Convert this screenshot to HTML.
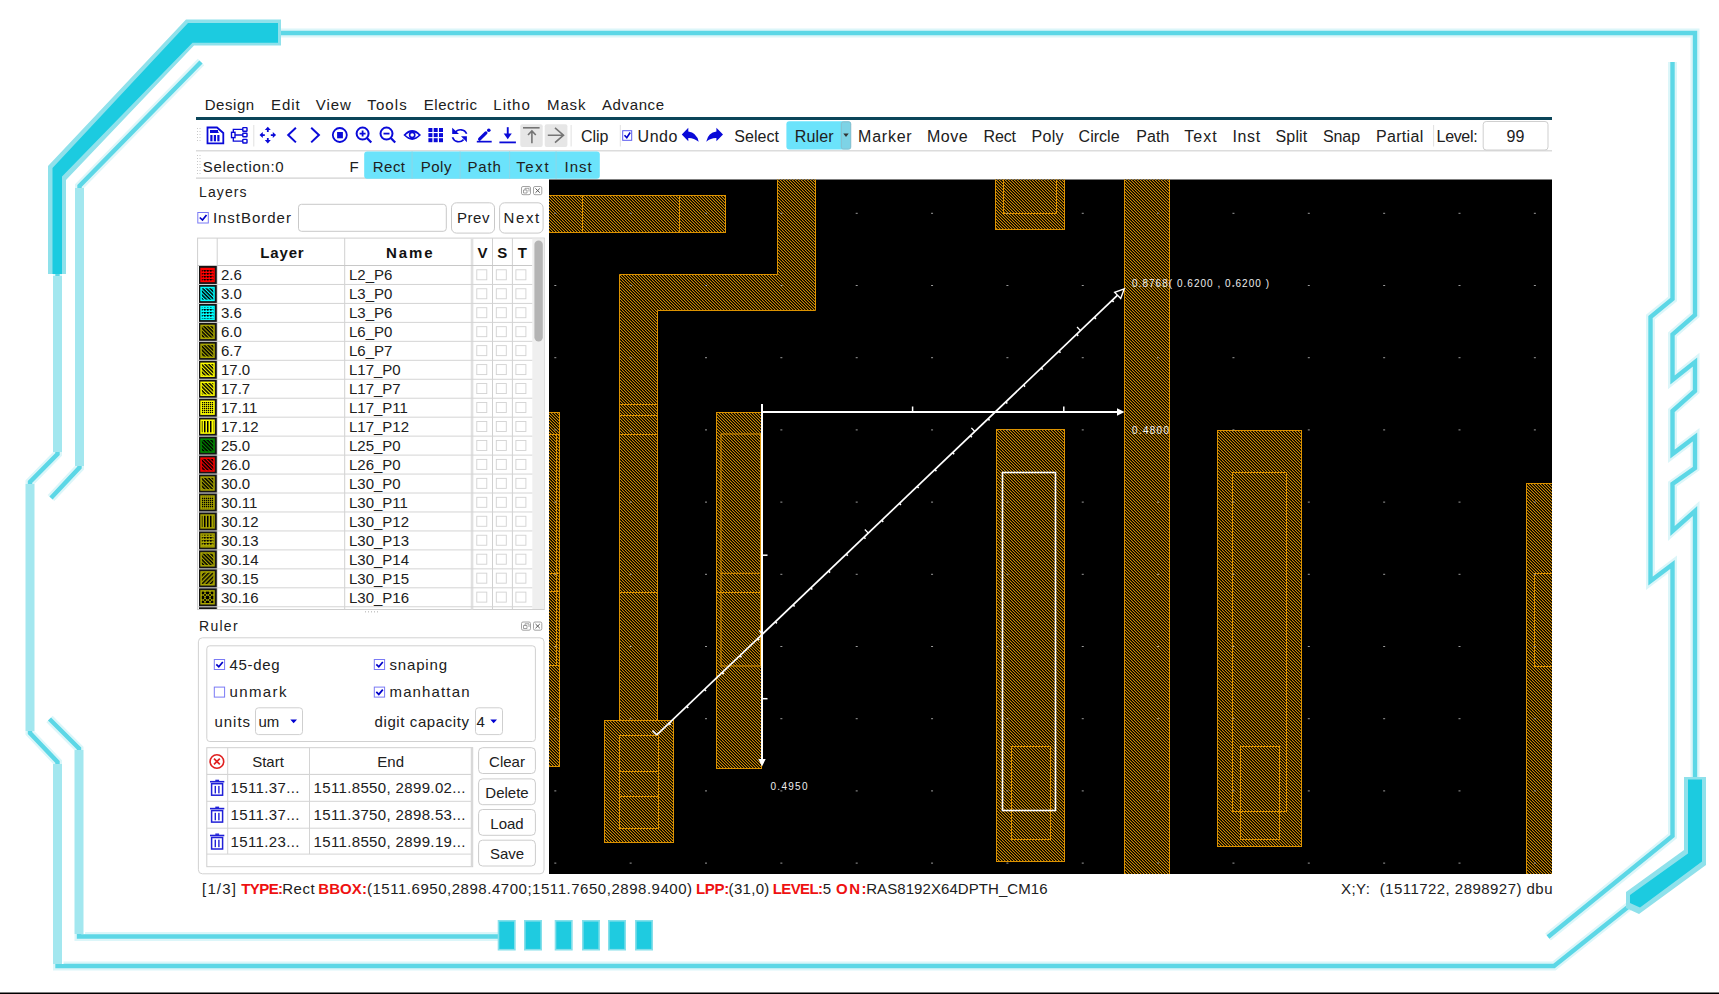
<!DOCTYPE html><html><head><meta charset="utf-8"><style>
html,body{margin:0;padding:0;}
body{width:1719px;height:994px;overflow:hidden;background:#fff;}
svg{position:absolute;left:0;top:0;font-family:"Liberation Sans",sans-serif;}
</style></head><body>
<svg width="1719" height="994" viewBox="0 0 1719 994">
<defs>
<pattern id="p_grid" width="3" height="3" patternUnits="userSpaceOnUse"><rect x="0" y="0" width="1.6" height="1.6" fill="#000"/><rect x="0" y="0" width="3" height="0.7" fill="#000" opacity="0.6"/></pattern>
<pattern id="p_diag" width="2.6" height="2.6" patternUnits="userSpaceOnUse" patternTransform="rotate(45)"><rect x="0" y="0" width="2.6" height="1.5" fill="#000"/></pattern>
<pattern id="p_diag2" width="3" height="3" patternUnits="userSpaceOnUse" patternTransform="rotate(-45)"><rect x="0" y="0" width="3" height="1.5" fill="#000"/></pattern>
<pattern id="p_dense" width="2" height="2" patternUnits="userSpaceOnUse"><rect x="0" y="0" width="1.3" height="1.3" fill="#000"/></pattern>
<pattern id="p_vwave" width="3" height="3" patternUnits="userSpaceOnUse"><rect x="0" y="0" width="1.5" height="3" fill="#000"/></pattern>
<pattern id="p_dots" width="5" height="5" patternUnits="userSpaceOnUse"><circle cx="2.5" cy="2.5" r="1.9" fill="#000"/><path d="M0 0 L5 5 M5 0 L0 5" stroke="#000" stroke-width="0.8"/></pattern>
<pattern id="hatch" width="3" height="3" patternUnits="userSpaceOnUse"><rect x="0" y="0" width="1" height="1" fill="#cc8800"/><rect x="1" y="1" width="1" height="1" fill="#cc8800"/><rect x="2" y="2" width="1" height="1" fill="#cc8800"/><rect x="1" y="0" width="1" height="1" fill="#4a3200"/><rect x="2" y="1" width="1" height="1" fill="#4a3200"/><rect x="0" y="2" width="1" height="1" fill="#4a3200"/></pattern>
</defs>
<path d="M281 33 L1695 33 L1695 315 L1672.5 334.5 L1672.5 380 L1695 362 L1695 391 L1672.5 411 L1672.5 454 L1695 437 L1695 468 L1672.5 484 L1672.5 531 L1695 511 L1695 790" fill="none" stroke="#dcf6f9" stroke-width="9" stroke-linejoin="miter" stroke-miterlimit="3"/>
<path d="M281 33 L1695 33 L1695 315 L1672.5 334.5 L1672.5 380 L1695 362 L1695 391 L1672.5 411 L1672.5 454 L1695 437 L1695 468 L1672.5 484 L1672.5 531 L1695 511 L1695 790" fill="none" stroke="#5cd7e6" stroke-width="4.4" stroke-linejoin="miter" stroke-miterlimit="3"/>
<path d="M1633 903 L1554 966 L57.5 966 L57.5 762 L30 733 L30 482 L57.5 454 L57.5 268" fill="none" stroke="#dcf6f9" stroke-width="9" stroke-linejoin="miter" stroke-miterlimit="3"/>
<path d="M1633 903 L1554 966 L57.5 966 L57.5 762 L30 733 L30 482 L57.5 454 L57.5 268" fill="none" stroke="#5cd7e6" stroke-width="4.4" stroke-linejoin="miter" stroke-miterlimit="3"/>
<path d="M1672.5 62 L1672.5 299 L1650.5 317 L1650.5 581 L1672.5 564.5 L1672.5 836 L1548 937" fill="none" stroke="#dcf6f9" stroke-width="9" stroke-linejoin="miter" stroke-miterlimit="3"/>
<path d="M1672.5 62 L1672.5 299 L1650.5 317 L1650.5 581 L1672.5 564.5 L1672.5 836 L1548 937" fill="none" stroke="#5cd7e6" stroke-width="4.4" stroke-linejoin="miter" stroke-miterlimit="3"/>
<path d="M201 62 L79.5 186 L79.5 467.6 L51 498" fill="none" stroke="#dcf6f9" stroke-width="9" stroke-linejoin="miter" stroke-miterlimit="3"/>
<path d="M201 62 L79.5 186 L79.5 467.6 L51 498" fill="none" stroke="#5cd7e6" stroke-width="4.4" stroke-linejoin="miter" stroke-miterlimit="3"/>
<path d="M49.5 719 L79 748.5 L79 936.5 L500 936.5" fill="none" stroke="#dcf6f9" stroke-width="9" stroke-linejoin="miter" stroke-miterlimit="3"/>
<path d="M49.5 719 L79 748.5 L79 936.5 L500 936.5" fill="none" stroke="#5cd7e6" stroke-width="4.4" stroke-linejoin="miter" stroke-miterlimit="3"/>
<polygon points="48,274 48,166 186,19.5 281,19.5 281,45.5 194,45.5 66,180 66,274" fill="#8fe1eb"/>
<polygon points="52.5,274 52.5,168 188,23 278,23 278,42.7 192.5,42.7 62,176.5 62,274" fill="#1ccbe0"/>
<polygon points="1684,777 1706,777 1706,865 1639,914 1626,908 1626,892 1684,850" fill="#8fe1eb"/>
<polygon points="1688,779.5 1702,779.5 1702,861.5 1640,907.5 1630,903 1630,895 1688,853.5" fill="#1ccbe0"/>
<line x1="57.50" y1="276.00" x2="57.50" y2="452.00" stroke="#ffffff" stroke-width="12" />
<line x1="57.50" y1="276.00" x2="57.50" y2="452.00" stroke="#a3e7ef" stroke-width="9" />
<line x1="30.00" y1="484.00" x2="30.00" y2="731.00" stroke="#ffffff" stroke-width="12" />
<line x1="30.00" y1="484.00" x2="30.00" y2="731.00" stroke="#a3e7ef" stroke-width="9" />
<line x1="57.50" y1="764.00" x2="57.50" y2="964.00" stroke="#ffffff" stroke-width="12" />
<line x1="57.50" y1="764.00" x2="57.50" y2="964.00" stroke="#a3e7ef" stroke-width="9" />
<line x1="79.50" y1="188.00" x2="79.50" y2="466.00" stroke="#ffffff" stroke-width="12" />
<line x1="79.50" y1="188.00" x2="79.50" y2="466.00" stroke="#a3e7ef" stroke-width="9" />
<line x1="79.00" y1="750.00" x2="79.00" y2="934.00" stroke="#ffffff" stroke-width="12" />
<line x1="79.00" y1="750.00" x2="79.00" y2="934.00" stroke="#a3e7ef" stroke-width="9" />
<rect x="498.50" y="920.80" width="16.40" height="28.90" fill="#1fcbe0" stroke="#86dfea" stroke-width="1.6" rx="0" />
<rect x="524.80" y="920.80" width="16.40" height="28.90" fill="#1fcbe0" stroke="#86dfea" stroke-width="1.6" rx="0" />
<rect x="555.50" y="920.80" width="16.40" height="28.90" fill="#1fcbe0" stroke="#86dfea" stroke-width="1.6" rx="0" />
<rect x="582.80" y="920.80" width="16.40" height="28.90" fill="#1fcbe0" stroke="#86dfea" stroke-width="1.6" rx="0" />
<rect x="608.80" y="920.80" width="16.40" height="28.90" fill="#1fcbe0" stroke="#86dfea" stroke-width="1.6" rx="0" />
<rect x="635.80" y="920.80" width="16.40" height="28.90" fill="#1fcbe0" stroke="#86dfea" stroke-width="1.6" rx="0" />
<rect x="0.00" y="992.50" width="1719.00" height="1.50" fill="#000" stroke="none" stroke-width="1" rx="0" />
<text x="204.70" y="110.00" font-size="15" fill="#202020" font-weight="normal" text-anchor="start" textLength="49.5" lengthAdjust="spacing" >Design</text>
<text x="271.00" y="110.00" font-size="15" fill="#202020" font-weight="normal" text-anchor="start" textLength="28.6" lengthAdjust="spacing" >Edit</text>
<text x="315.70" y="110.00" font-size="15" fill="#202020" font-weight="normal" text-anchor="start" textLength="35.2" lengthAdjust="spacing" >View</text>
<text x="367.30" y="110.00" font-size="15" fill="#202020" font-weight="normal" text-anchor="start" textLength="39.4" lengthAdjust="spacing" >Tools</text>
<text x="423.70" y="110.00" font-size="15" fill="#202020" font-weight="normal" text-anchor="start" textLength="53.2" lengthAdjust="spacing" >Electric</text>
<text x="493.30" y="110.00" font-size="15" fill="#202020" font-weight="normal" text-anchor="start" textLength="36.5" lengthAdjust="spacing" >Litho</text>
<text x="547.00" y="110.00" font-size="15" fill="#202020" font-weight="normal" text-anchor="start" textLength="38.5" lengthAdjust="spacing" >Mask</text>
<text x="601.90" y="110.00" font-size="15" fill="#202020" font-weight="normal" text-anchor="start" textLength="62.2" lengthAdjust="spacing" >Advance</text>
<rect x="196.00" y="117.00" width="1356.00" height="3.00" fill="#0b4559" stroke="none" stroke-width="1" rx="0" />
<rect x="196.00" y="150.00" width="1356.00" height="1.50" fill="#dcdcdc" stroke="none" stroke-width="1" rx="0" />
<rect x="197.00" y="128.00" width="1.00" height="1.00" fill="#c8c8c8" stroke="none" stroke-width="1" rx="0" />
<rect x="199.50" y="128.00" width="1.00" height="1.00" fill="#c8c8c8" stroke="none" stroke-width="1" rx="0" />
<rect x="197.00" y="131.00" width="1.00" height="1.00" fill="#c8c8c8" stroke="none" stroke-width="1" rx="0" />
<rect x="199.50" y="131.00" width="1.00" height="1.00" fill="#c8c8c8" stroke="none" stroke-width="1" rx="0" />
<rect x="197.00" y="134.00" width="1.00" height="1.00" fill="#c8c8c8" stroke="none" stroke-width="1" rx="0" />
<rect x="199.50" y="134.00" width="1.00" height="1.00" fill="#c8c8c8" stroke="none" stroke-width="1" rx="0" />
<rect x="197.00" y="137.00" width="1.00" height="1.00" fill="#c8c8c8" stroke="none" stroke-width="1" rx="0" />
<rect x="199.50" y="137.00" width="1.00" height="1.00" fill="#c8c8c8" stroke="none" stroke-width="1" rx="0" />
<rect x="197.00" y="140.00" width="1.00" height="1.00" fill="#c8c8c8" stroke="none" stroke-width="1" rx="0" />
<rect x="199.50" y="140.00" width="1.00" height="1.00" fill="#c8c8c8" stroke="none" stroke-width="1" rx="0" />
<path d="M207.5 127.5 L217 127.5 L223.3 133 L223.3 143.3 L207.5 143.3 Z" fill="none" stroke="#0a0ad8" stroke-width="1.8" />
<rect x="210.00" y="130.00" width="8.00" height="3.00" fill="#0a0ad8" stroke="none" stroke-width="1" rx="0" />
<path d="M210 130 L217 130 L219 133 L210 133 Z" fill="#0a0ad8" stroke="none" stroke-width="1" />
<rect x="210.30" y="135.00" width="2.20" height="6.30" fill="#0a0ad8" stroke="none" stroke-width="1" rx="0" />
<rect x="213.80" y="135.00" width="2.20" height="6.30" fill="#0a0ad8" stroke="none" stroke-width="1" rx="0" />
<rect x="217.30" y="135.00" width="2.20" height="6.30" fill="#0a0ad8" stroke="none" stroke-width="1" rx="0" />
<rect x="231.50" y="132.30" width="3.50" height="5.30" fill="none" stroke="#0a0ad8" stroke-width="1.4" rx="0" />
<rect x="242.80" y="127.60" width="4.20" height="3.60" fill="none" stroke="#0a0ad8" stroke-width="1.4" rx="0.5" />
<rect x="242.80" y="133.20" width="4.20" height="3.60" fill="none" stroke="#0a0ad8" stroke-width="1.4" rx="0.5" />
<rect x="242.80" y="139.40" width="4.20" height="3.60" fill="none" stroke="#0a0ad8" stroke-width="1.4" rx="0.5" />
<path d="M233.3 132.3 L233.3 129.4 L242.8 129.4 M235 135 L242.8 135 M233.3 137.6 L233.3 141.2 L242.8 141.2" fill="none" stroke="#0a0ad8" stroke-width="1.3" />
<rect x="253.30" y="125.00" width="1.00" height="21.50" fill="#e0e0e0" stroke="none" stroke-width="1" rx="0" />
<path d="M267.8 129.1 L267.8 132.1 M267.8 138.1 L267.8 141.1 M261.8 135.1 L264.8 135.1 M270.8 135.1 L273.8 135.1" fill="none" stroke="#0a0ad8" stroke-width="1.8" />
<path d="M264.8 130.1 L267.8 126.8 L270.8 130.1 Z M264.8 140.1 L267.8 143.4 L270.8 140.1 Z M262.8 132.1 L259.5 135.1 L262.8 138.1 Z M272.8 132.1 L276.1 135.1 L272.8 138.1 Z" fill="#0a0ad8" stroke="none" stroke-width="1" />
<path d="M295.9 127.8 L288.2 135 L295.9 142.4" fill="none" stroke="#0a0ad8" stroke-width="2" />
<path d="M311.2 127.8 L318.9 135 L311.2 142.4" fill="none" stroke="#0a0ad8" stroke-width="2" />
<circle cx="339.8" cy="135" r="7" fill="none" stroke="#0a0ad8" stroke-width="1.8"/>
<rect x="337.10" y="132.00" width="5.80" height="6.30" fill="#0a0ad8" stroke="none" stroke-width="1" rx="0" />
<circle cx="362.6" cy="133.6" r="6" fill="none" stroke="#0a0ad8" stroke-width="2"/>
<path d="M366.90000000000003 137.9 L371.3 142.5" fill="none" stroke="#0a0ad8" stroke-width="2.2" />
<path d="M359.6 133.6 L365.6 133.6 M362.6 130.6 L362.6 136.6" fill="none" stroke="#0a0ad8" stroke-width="1.8" />
<circle cx="386.5" cy="133.6" r="6" fill="none" stroke="#0a0ad8" stroke-width="2"/>
<path d="M390.8 137.9 L395.2 142.5" fill="none" stroke="#0a0ad8" stroke-width="2.2" />
<path d="M383.5 133.6 L389.5 133.6" fill="none" stroke="#0a0ad8" stroke-width="1.8" />
<path d="M404.6 135 Q412.2 127 419.8 135 Q412.2 143 404.6 135 Z" fill="none" stroke="#0a0ad8" stroke-width="1.8" />
<circle cx="412.2" cy="135" r="2.6" fill="none" stroke="#0a0ad8" stroke-width="1.6"/>
<rect x="428.40" y="128.00" width="4.00" height="4.00" fill="#0a0ad8" stroke="none" stroke-width="1" rx="0" />
<rect x="428.40" y="133.10" width="4.00" height="4.00" fill="#0a0ad8" stroke="none" stroke-width="1" rx="0" />
<rect x="428.40" y="138.20" width="4.00" height="4.00" fill="#0a0ad8" stroke="none" stroke-width="1" rx="0" />
<rect x="433.70" y="128.00" width="4.00" height="4.00" fill="#0a0ad8" stroke="none" stroke-width="1" rx="0" />
<rect x="433.70" y="133.10" width="4.00" height="4.00" fill="#0a0ad8" stroke="none" stroke-width="1" rx="0" />
<rect x="433.70" y="138.20" width="4.00" height="4.00" fill="#0a0ad8" stroke="none" stroke-width="1" rx="0" />
<rect x="439.00" y="128.00" width="4.00" height="4.00" fill="#0a0ad8" stroke="none" stroke-width="1" rx="0" />
<rect x="439.00" y="133.10" width="4.00" height="4.00" fill="#0a0ad8" stroke="none" stroke-width="1" rx="0" />
<rect x="439.00" y="138.20" width="4.00" height="4.00" fill="#0a0ad8" stroke="none" stroke-width="1" rx="0" />
<path d="M455.2 132.6 A6.5 6.5 0 0 1 466.6 133.8" fill="none" stroke="#0a0ad8" stroke-width="1.7" />
<path d="M452.2 127.8 L452.2 133.9 L459 133.9 Z" fill="#0a0ad8" stroke="none" stroke-width="1" />
<path d="M452.5 137.2 A6.6 6.6 0 0 0 463.6 139.6" fill="none" stroke="#0a0ad8" stroke-width="1.7" />
<path d="M461 136.3 L466.9 136.3 L466.9 142.3 Z" fill="#0a0ad8" stroke="none" stroke-width="1" />
<path d="M479.6 139.2 L485.9 132.9" fill="none" stroke="#0a0ad8" stroke-width="3.2" stroke-linecap="round"/>
<circle cx="488.8" cy="130.3" r="1.8" fill="#0a0ad8"/>
<rect x="476.80" y="140.80" width="14.90" height="1.70" fill="#0a0ad8" stroke="none" stroke-width="1" rx="0" />
<rect x="506.80" y="127.20" width="1.90" height="7.50" fill="#0a0ad8" stroke="none" stroke-width="1" rx="0" />
<path d="M503.7 133.5 L511.8 133.5 L507.75 139.2 Z" fill="#0a0ad8" stroke="none" stroke-width="1" />
<rect x="499.40" y="141.50" width="16.50" height="1.80" fill="#0a0ad8" stroke="none" stroke-width="1" rx="0" />
<rect x="520.30" y="124.30" width="22.40" height="22.70" fill="#e6e6e6" stroke="none" stroke-width="1" rx="2" />
<rect x="544.70" y="124.30" width="22.70" height="22.70" fill="#e6e6e6" stroke="none" stroke-width="1" rx="2" />
<rect x="523.00" y="127.00" width="16.60" height="1.60" fill="#747474" stroke="none" stroke-width="1" rx="0" />
<path d="M531.9 131 L531.9 143.2 M528 135 L531.9 131 L535.8 135" fill="none" stroke="#747474" stroke-width="1.6" />
<path d="M547.8 135.2 L563.5 135.2 M555 127.8 L563.5 135.2 L555 142.6" fill="none" stroke="#747474" stroke-width="1.6" />
<rect x="570.60" y="125.00" width="1.00" height="21.50" fill="#e0e0e0" stroke="none" stroke-width="1" rx="0" />
<text x="581.00" y="141.90" font-size="16" fill="#202020" font-weight="normal" text-anchor="start" textLength="27.3" lengthAdjust="spacing" >Clip</text>
<rect x="619.80" y="125.00" width="1.00" height="21.50" fill="#e0e0e0" stroke="none" stroke-width="1" rx="0" />
<rect x="622.70" y="130.70" width="9.00" height="9.60" fill="none" stroke="#5a5af0" stroke-width="1" rx="0" />
<path d="M624.5 135.2 L626.8 137.8 L630.2 132.5" fill="none" stroke="#0000c8" stroke-width="1.6" />
<text x="637.50" y="141.90" font-size="16" fill="#202020" font-weight="normal" text-anchor="start" textLength="40" lengthAdjust="spacing" >Undo</text>
<path d="M681.8 134.5 L688.3 127.8 L688.3 131.5 Q696.5 132.2 698.7 141.8 Q693.8 137.8 688.3 138 L688.3 141.3 Z" fill="#0a0ad8" stroke="none" stroke-width="1" />
<path d="M723 134.4 L716.4 127.8 L716.4 131.5 Q708.3 132.2 706.2 141.7 Q711 137.8 716.4 138 L716.4 141.3 Z" fill="#0a0ad8" stroke="none" stroke-width="1" />
<text x="734.30" y="141.90" font-size="16" fill="#202020" font-weight="normal" text-anchor="start" textLength="44.6" lengthAdjust="spacing" >Select</text>
<rect x="786.40" y="121.30" width="64.60" height="28.30" fill="#6be3fb" stroke="none" stroke-width="1" rx="3" />
<rect x="841.30" y="121.80" width="9.50" height="27.30" fill="#7dd3e6" stroke="#8fb8c4" stroke-width="0.8" rx="2" />
<path d="M843.3 133.5 L848.7 133.5 L846 137 Z" fill="#333" stroke="none" stroke-width="1" />
<text x="794.70" y="141.90" font-size="16" fill="#202020" font-weight="normal" text-anchor="start" textLength="38.9" lengthAdjust="spacing" >Ruler</text>
<text x="858.10" y="141.90" font-size="16" fill="#202020" font-weight="normal" text-anchor="start" textLength="53.5" lengthAdjust="spacing" >Marker</text>
<text x="926.90" y="141.90" font-size="16" fill="#202020" font-weight="normal" text-anchor="start" textLength="40.8" lengthAdjust="spacing" >Move</text>
<text x="983.60" y="141.90" font-size="16" fill="#202020" font-weight="normal" text-anchor="start" textLength="32.4" lengthAdjust="spacing" >Rect</text>
<text x="1031.60" y="141.90" font-size="16" fill="#202020" font-weight="normal" text-anchor="start" textLength="31.9" lengthAdjust="spacing" >Poly</text>
<text x="1078.60" y="141.90" font-size="16" fill="#202020" font-weight="normal" text-anchor="start" textLength="41.0" lengthAdjust="spacing" >Circle</text>
<text x="1136.20" y="141.90" font-size="16" fill="#202020" font-weight="normal" text-anchor="start" textLength="33.3" lengthAdjust="spacing" >Path</text>
<text x="1184.20" y="141.90" font-size="16" fill="#202020" font-weight="normal" text-anchor="start" textLength="32.4" lengthAdjust="spacing" >Text</text>
<text x="1232.40" y="141.90" font-size="16" fill="#202020" font-weight="normal" text-anchor="start" textLength="27.8" lengthAdjust="spacing" >Inst</text>
<text x="1275.50" y="141.90" font-size="16" fill="#202020" font-weight="normal" text-anchor="start" textLength="31.8" lengthAdjust="spacing" >Split</text>
<text x="1322.90" y="141.90" font-size="16" fill="#202020" font-weight="normal" text-anchor="start" textLength="37.2" lengthAdjust="spacing" >Snap</text>
<text x="1376.00" y="141.90" font-size="16" fill="#202020" font-weight="normal" text-anchor="start" textLength="47.2" lengthAdjust="spacing" >Partial</text>
<rect x="1433.10" y="125.00" width="1.00" height="21.50" fill="#e0e0e0" stroke="none" stroke-width="1" rx="0" />
<text x="1436.60" y="141.90" font-size="16" fill="#202020" font-weight="normal" text-anchor="start" textLength="41" lengthAdjust="spacing" >Level:</text>
<rect x="1483.20" y="121.50" width="64.80" height="28.50" fill="#fff" stroke="#cfcfcf" stroke-width="1" rx="3" />
<text x="1515.50" y="141.90" font-size="16" fill="#202020" font-weight="normal" text-anchor="middle" >99</text>
<rect x="197.00" y="155.00" width="1.00" height="1.00" fill="#c8c8c8" stroke="none" stroke-width="1" rx="0" />
<rect x="199.50" y="155.00" width="1.00" height="1.00" fill="#c8c8c8" stroke="none" stroke-width="1" rx="0" />
<rect x="197.00" y="158.00" width="1.00" height="1.00" fill="#c8c8c8" stroke="none" stroke-width="1" rx="0" />
<rect x="199.50" y="158.00" width="1.00" height="1.00" fill="#c8c8c8" stroke="none" stroke-width="1" rx="0" />
<rect x="197.00" y="161.00" width="1.00" height="1.00" fill="#c8c8c8" stroke="none" stroke-width="1" rx="0" />
<rect x="199.50" y="161.00" width="1.00" height="1.00" fill="#c8c8c8" stroke="none" stroke-width="1" rx="0" />
<rect x="197.00" y="164.00" width="1.00" height="1.00" fill="#c8c8c8" stroke="none" stroke-width="1" rx="0" />
<rect x="199.50" y="164.00" width="1.00" height="1.00" fill="#c8c8c8" stroke="none" stroke-width="1" rx="0" />
<rect x="197.00" y="167.00" width="1.00" height="1.00" fill="#c8c8c8" stroke="none" stroke-width="1" rx="0" />
<rect x="199.50" y="167.00" width="1.00" height="1.00" fill="#c8c8c8" stroke="none" stroke-width="1" rx="0" />
<rect x="197.00" y="170.00" width="1.00" height="1.00" fill="#c8c8c8" stroke="none" stroke-width="1" rx="0" />
<rect x="199.50" y="170.00" width="1.00" height="1.00" fill="#c8c8c8" stroke="none" stroke-width="1" rx="0" />
<rect x="197.00" y="173.00" width="1.00" height="1.00" fill="#c8c8c8" stroke="none" stroke-width="1" rx="0" />
<rect x="199.50" y="173.00" width="1.00" height="1.00" fill="#c8c8c8" stroke="none" stroke-width="1" rx="0" />
<text x="202.80" y="171.70" font-size="15" fill="#202020" font-weight="normal" text-anchor="start" textLength="80.8" lengthAdjust="spacing" >Selection:0</text>
<text x="349.50" y="171.70" font-size="15" fill="#202020" font-weight="normal" text-anchor="start" >F</text>
<rect x="196.00" y="177.50" width="353.00" height="1.20" fill="#cfcfcf" stroke="none" stroke-width="1" rx="0" />
<rect x="364.20" y="151.50" width="235.60" height="27.20" fill="#6be3fb" stroke="none" stroke-width="1" rx="3" />
<rect x="411.60" y="151.50" width="1.00" height="27.20" fill="#8ed6e6" stroke="none" stroke-width="1" rx="0" />
<rect x="459.60" y="151.50" width="1.00" height="27.20" fill="#8ed6e6" stroke="none" stroke-width="1" rx="0" />
<rect x="509.10" y="151.50" width="1.00" height="27.20" fill="#8ed6e6" stroke="none" stroke-width="1" rx="0" />
<rect x="555.60" y="151.50" width="1.00" height="27.20" fill="#8ed6e6" stroke="none" stroke-width="1" rx="0" />
<text x="372.80" y="171.70" font-size="15" fill="#202020" font-weight="normal" text-anchor="start" textLength="32.2" lengthAdjust="spacing" >Rect</text>
<text x="420.80" y="171.70" font-size="15" fill="#202020" font-weight="normal" text-anchor="start" textLength="30.6" lengthAdjust="spacing" >Poly</text>
<text x="467.40" y="171.70" font-size="15" fill="#202020" font-weight="normal" text-anchor="start" textLength="33.5" lengthAdjust="spacing" >Path</text>
<text x="516.20" y="171.70" font-size="15" fill="#202020" font-weight="normal" text-anchor="start" textLength="32.4" lengthAdjust="spacing" >Text</text>
<text x="564.50" y="171.70" font-size="15" fill="#202020" font-weight="normal" text-anchor="start" textLength="27.1" lengthAdjust="spacing" >Inst</text>
<text x="199.00" y="196.80" font-size="14" fill="#202020" font-weight="normal" text-anchor="start" textLength="47.6" lengthAdjust="spacing" >Layers</text>
<rect x="521.50" y="186.50" width="9.00" height="8.20" fill="none" stroke="#9a9a9a" stroke-width="0.9" rx="1.5" />
<path d="M523.5 190.0 L523.5 193.0 L527 193.0 L527 190.0 Z M525 190.0 L525 188.3 L529 188.3 L529 191.5" fill="none" stroke="#8a8a8a" stroke-width="0.8" />
<rect x="533.50" y="186.50" width="8.30" height="8.20" fill="none" stroke="#9a9a9a" stroke-width="0.9" rx="1.5" />
<path d="M535.5 188.5 L539.8 192.7 M539.8 188.5 L535.5 192.7" fill="none" stroke="#555" stroke-width="1" />
<rect x="197.80" y="212.50" width="10.50" height="10.50" fill="#fff" stroke="#7a7af5" stroke-width="1" rx="0" />
<path d="M199.8 217.5 L202.5 220 L206.5 215" fill="none" stroke="#0000c8" stroke-width="1.7" />
<text x="212.90" y="223.00" font-size="15" fill="#202020" font-weight="normal" text-anchor="start" textLength="78" lengthAdjust="spacing" >InstBorder</text>
<rect x="298.50" y="204.30" width="147.80" height="27.00" fill="#fff" stroke="#c9c9c9" stroke-width="1" rx="3" />
<rect x="451.50" y="202.80" width="43.00" height="30.30" fill="#fff" stroke="#c9c9c9" stroke-width="1" rx="5" />
<rect x="499.60" y="202.80" width="43.50" height="30.30" fill="#fff" stroke="#c9c9c9" stroke-width="1" rx="5" />
<text x="456.90" y="223.00" font-size="15" fill="#202020" font-weight="normal" text-anchor="start" textLength="32.5" lengthAdjust="spacing" >Prev</text>
<text x="503.60" y="223.00" font-size="15" fill="#202020" font-weight="normal" text-anchor="start" textLength="35.5" lengthAdjust="spacing" >Next</text>
<rect x="197.60" y="238.10" width="346.70" height="371.40" fill="#fff" stroke="#cfcfcf" stroke-width="1" rx="0" />
<line x1="217.20" y1="238.10" x2="217.20" y2="609.00" stroke="#d0d0d0" stroke-width="1" />
<line x1="344.70" y1="238.10" x2="344.70" y2="609.00" stroke="#d0d0d0" stroke-width="1" />
<line x1="472.60" y1="238.10" x2="472.60" y2="609.00" stroke="#d0d0d0" stroke-width="1" />
<line x1="492.50" y1="238.10" x2="492.50" y2="609.00" stroke="#d0d0d0" stroke-width="1" />
<line x1="512.40" y1="238.10" x2="512.40" y2="609.00" stroke="#d0d0d0" stroke-width="1" />
<line x1="472.00" y1="238.10" x2="472.00" y2="609.50" stroke="#e0e0e0" stroke-width="2.5" />
<line x1="197.60" y1="265.50" x2="532.30" y2="265.50" stroke="#c8c8c8" stroke-width="1" />
<text x="260.20" y="258.00" font-size="15" fill="#111" font-weight="bold" text-anchor="start" textLength="43.5" lengthAdjust="spacing" >Layer</text>
<text x="386.00" y="258.00" font-size="15" fill="#111" font-weight="bold" text-anchor="start" textLength="46.5" lengthAdjust="spacing" >Name</text>
<text x="482.40" y="258.00" font-size="15" fill="#111" font-weight="bold" text-anchor="middle" >V</text>
<text x="502.20" y="258.00" font-size="15" fill="#111" font-weight="bold" text-anchor="middle" >S</text>
<text x="522.30" y="258.00" font-size="15" fill="#111" font-weight="bold" text-anchor="middle" >T</text>
<rect x="532.30" y="238.60" width="12.00" height="370.40" fill="#efefef" stroke="none" stroke-width="1" rx="0" />
<rect x="534.40" y="240.50" width="8.40" height="101.00" fill="#b4b4b4" stroke="none" stroke-width="1" rx="4.2" />
<line x1="197.60" y1="284.46" x2="532.30" y2="284.46" stroke="#d4d4d4" stroke-width="1" />
<rect x="199.00" y="266.00" width="17.80" height="17.96" fill="#151515" stroke="none" stroke-width="1" rx="0" />
<rect x="200.30" y="267.80" width="14.50" height="14.36" fill="#ff0000" stroke="none" stroke-width="1" rx="0" />
<rect x="201.80" y="269.30" width="11.50" height="11.36" fill="url(#p_grid)" stroke="none" stroke-width="1" rx="0" />
<text x="221.00" y="280.20" font-size="15" fill="#202020" font-weight="normal" text-anchor="start" >2.6</text>
<text x="349.00" y="280.20" font-size="15" fill="#202020" font-weight="normal" text-anchor="start" >L2_P6</text>
<rect x="476.80" y="269.80" width="10.00" height="10.00" fill="#fff" stroke="#d2d2d2" stroke-width="0.9" rx="0" />
<rect x="496.30" y="269.80" width="10.00" height="10.00" fill="#fff" stroke="#d2d2d2" stroke-width="0.9" rx="0" />
<rect x="515.90" y="269.80" width="10.00" height="10.00" fill="#fff" stroke="#d2d2d2" stroke-width="0.9" rx="0" />
<line x1="197.60" y1="303.42" x2="532.30" y2="303.42" stroke="#d4d4d4" stroke-width="1" />
<rect x="199.00" y="284.96" width="17.80" height="17.96" fill="#151515" stroke="none" stroke-width="1" rx="0" />
<rect x="200.30" y="286.76" width="14.50" height="14.36" fill="#00ffff" stroke="none" stroke-width="1" rx="0" />
<rect x="201.80" y="288.26" width="11.50" height="11.36" fill="url(#p_diag)" stroke="none" stroke-width="1" rx="0" />
<text x="221.00" y="299.16" font-size="15" fill="#202020" font-weight="normal" text-anchor="start" >3.0</text>
<text x="349.00" y="299.16" font-size="15" fill="#202020" font-weight="normal" text-anchor="start" >L3_P0</text>
<rect x="476.80" y="288.76" width="10.00" height="10.00" fill="#fff" stroke="#d2d2d2" stroke-width="0.9" rx="0" />
<rect x="496.30" y="288.76" width="10.00" height="10.00" fill="#fff" stroke="#d2d2d2" stroke-width="0.9" rx="0" />
<rect x="515.90" y="288.76" width="10.00" height="10.00" fill="#fff" stroke="#d2d2d2" stroke-width="0.9" rx="0" />
<line x1="197.60" y1="322.38" x2="532.30" y2="322.38" stroke="#d4d4d4" stroke-width="1" />
<rect x="199.00" y="303.92" width="17.80" height="17.96" fill="#151515" stroke="none" stroke-width="1" rx="0" />
<rect x="200.30" y="305.72" width="14.50" height="14.36" fill="#00ffff" stroke="none" stroke-width="1" rx="0" />
<rect x="201.80" y="307.22" width="11.50" height="11.36" fill="url(#p_grid)" stroke="none" stroke-width="1" rx="0" />
<text x="221.00" y="318.12" font-size="15" fill="#202020" font-weight="normal" text-anchor="start" >3.6</text>
<text x="349.00" y="318.12" font-size="15" fill="#202020" font-weight="normal" text-anchor="start" >L3_P6</text>
<rect x="476.80" y="307.72" width="10.00" height="10.00" fill="#fff" stroke="#d2d2d2" stroke-width="0.9" rx="0" />
<rect x="496.30" y="307.72" width="10.00" height="10.00" fill="#fff" stroke="#d2d2d2" stroke-width="0.9" rx="0" />
<rect x="515.90" y="307.72" width="10.00" height="10.00" fill="#fff" stroke="#d2d2d2" stroke-width="0.9" rx="0" />
<line x1="197.60" y1="341.34" x2="532.30" y2="341.34" stroke="#d4d4d4" stroke-width="1" />
<rect x="199.00" y="322.88" width="17.80" height="17.96" fill="#151515" stroke="none" stroke-width="1" rx="0" />
<rect x="200.30" y="324.68" width="14.50" height="14.36" fill="#aaa600" stroke="none" stroke-width="1" rx="0" />
<rect x="201.80" y="326.18" width="11.50" height="11.36" fill="url(#p_diag)" stroke="none" stroke-width="1" rx="0" />
<text x="221.00" y="337.08" font-size="15" fill="#202020" font-weight="normal" text-anchor="start" >6.0</text>
<text x="349.00" y="337.08" font-size="15" fill="#202020" font-weight="normal" text-anchor="start" >L6_P0</text>
<rect x="476.80" y="326.68" width="10.00" height="10.00" fill="#fff" stroke="#d2d2d2" stroke-width="0.9" rx="0" />
<rect x="496.30" y="326.68" width="10.00" height="10.00" fill="#fff" stroke="#d2d2d2" stroke-width="0.9" rx="0" />
<rect x="515.90" y="326.68" width="10.00" height="10.00" fill="#fff" stroke="#d2d2d2" stroke-width="0.9" rx="0" />
<line x1="197.60" y1="360.30" x2="532.30" y2="360.30" stroke="#d4d4d4" stroke-width="1" />
<rect x="199.00" y="341.84" width="17.80" height="17.96" fill="#151515" stroke="none" stroke-width="1" rx="0" />
<rect x="200.30" y="343.64" width="14.50" height="14.36" fill="#aaa600" stroke="none" stroke-width="1" rx="0" />
<rect x="201.80" y="345.14" width="11.50" height="11.36" fill="url(#p_diag)" stroke="none" stroke-width="1" rx="0" />
<text x="221.00" y="356.04" font-size="15" fill="#202020" font-weight="normal" text-anchor="start" >6.7</text>
<text x="349.00" y="356.04" font-size="15" fill="#202020" font-weight="normal" text-anchor="start" >L6_P7</text>
<rect x="476.80" y="345.64" width="10.00" height="10.00" fill="#fff" stroke="#d2d2d2" stroke-width="0.9" rx="0" />
<rect x="496.30" y="345.64" width="10.00" height="10.00" fill="#fff" stroke="#d2d2d2" stroke-width="0.9" rx="0" />
<rect x="515.90" y="345.64" width="10.00" height="10.00" fill="#fff" stroke="#d2d2d2" stroke-width="0.9" rx="0" />
<line x1="197.60" y1="379.26" x2="532.30" y2="379.26" stroke="#d4d4d4" stroke-width="1" />
<rect x="199.00" y="360.80" width="17.80" height="17.96" fill="#151515" stroke="none" stroke-width="1" rx="0" />
<rect x="200.30" y="362.60" width="14.50" height="14.36" fill="#ffff00" stroke="none" stroke-width="1" rx="0" />
<rect x="201.80" y="364.10" width="11.50" height="11.36" fill="url(#p_diag)" stroke="none" stroke-width="1" rx="0" />
<text x="221.00" y="375.00" font-size="15" fill="#202020" font-weight="normal" text-anchor="start" >17.0</text>
<text x="349.00" y="375.00" font-size="15" fill="#202020" font-weight="normal" text-anchor="start" >L17_P0</text>
<rect x="476.80" y="364.60" width="10.00" height="10.00" fill="#fff" stroke="#d2d2d2" stroke-width="0.9" rx="0" />
<rect x="496.30" y="364.60" width="10.00" height="10.00" fill="#fff" stroke="#d2d2d2" stroke-width="0.9" rx="0" />
<rect x="515.90" y="364.60" width="10.00" height="10.00" fill="#fff" stroke="#d2d2d2" stroke-width="0.9" rx="0" />
<line x1="197.60" y1="398.22" x2="532.30" y2="398.22" stroke="#d4d4d4" stroke-width="1" />
<rect x="199.00" y="379.76" width="17.80" height="17.96" fill="#151515" stroke="none" stroke-width="1" rx="0" />
<rect x="200.30" y="381.56" width="14.50" height="14.36" fill="#ffff00" stroke="none" stroke-width="1" rx="0" />
<rect x="201.80" y="383.06" width="11.50" height="11.36" fill="url(#p_diag)" stroke="none" stroke-width="1" rx="0" />
<text x="221.00" y="393.96" font-size="15" fill="#202020" font-weight="normal" text-anchor="start" >17.7</text>
<text x="349.00" y="393.96" font-size="15" fill="#202020" font-weight="normal" text-anchor="start" >L17_P7</text>
<rect x="476.80" y="383.56" width="10.00" height="10.00" fill="#fff" stroke="#d2d2d2" stroke-width="0.9" rx="0" />
<rect x="496.30" y="383.56" width="10.00" height="10.00" fill="#fff" stroke="#d2d2d2" stroke-width="0.9" rx="0" />
<rect x="515.90" y="383.56" width="10.00" height="10.00" fill="#fff" stroke="#d2d2d2" stroke-width="0.9" rx="0" />
<line x1="197.60" y1="417.18" x2="532.30" y2="417.18" stroke="#d4d4d4" stroke-width="1" />
<rect x="199.00" y="398.72" width="17.80" height="17.96" fill="#151515" stroke="none" stroke-width="1" rx="0" />
<rect x="200.30" y="400.52" width="14.50" height="14.36" fill="#ffff00" stroke="none" stroke-width="1" rx="0" />
<rect x="201.80" y="402.02" width="11.50" height="11.36" fill="url(#p_dense)" stroke="none" stroke-width="1" rx="0" />
<text x="221.00" y="412.92" font-size="15" fill="#202020" font-weight="normal" text-anchor="start" >17.11</text>
<text x="349.00" y="412.92" font-size="15" fill="#202020" font-weight="normal" text-anchor="start" >L17_P11</text>
<rect x="476.80" y="402.52" width="10.00" height="10.00" fill="#fff" stroke="#d2d2d2" stroke-width="0.9" rx="0" />
<rect x="496.30" y="402.52" width="10.00" height="10.00" fill="#fff" stroke="#d2d2d2" stroke-width="0.9" rx="0" />
<rect x="515.90" y="402.52" width="10.00" height="10.00" fill="#fff" stroke="#d2d2d2" stroke-width="0.9" rx="0" />
<line x1="197.60" y1="436.14" x2="532.30" y2="436.14" stroke="#d4d4d4" stroke-width="1" />
<rect x="199.00" y="417.68" width="17.80" height="17.96" fill="#151515" stroke="none" stroke-width="1" rx="0" />
<rect x="200.30" y="419.48" width="14.50" height="14.36" fill="#ffff00" stroke="none" stroke-width="1" rx="0" />
<rect x="201.80" y="420.98" width="11.50" height="11.36" fill="url(#p_vwave)" stroke="none" stroke-width="1" rx="0" />
<text x="221.00" y="431.88" font-size="15" fill="#202020" font-weight="normal" text-anchor="start" >17.12</text>
<text x="349.00" y="431.88" font-size="15" fill="#202020" font-weight="normal" text-anchor="start" >L17_P12</text>
<rect x="476.80" y="421.48" width="10.00" height="10.00" fill="#fff" stroke="#d2d2d2" stroke-width="0.9" rx="0" />
<rect x="496.30" y="421.48" width="10.00" height="10.00" fill="#fff" stroke="#d2d2d2" stroke-width="0.9" rx="0" />
<rect x="515.90" y="421.48" width="10.00" height="10.00" fill="#fff" stroke="#d2d2d2" stroke-width="0.9" rx="0" />
<line x1="197.60" y1="455.10" x2="532.30" y2="455.10" stroke="#d4d4d4" stroke-width="1" />
<rect x="199.00" y="436.64" width="17.80" height="17.96" fill="#151515" stroke="none" stroke-width="1" rx="0" />
<rect x="200.30" y="438.44" width="14.50" height="14.36" fill="#008c00" stroke="none" stroke-width="1" rx="0" />
<rect x="201.80" y="439.94" width="11.50" height="11.36" fill="url(#p_diag)" stroke="none" stroke-width="1" rx="0" />
<text x="221.00" y="450.84" font-size="15" fill="#202020" font-weight="normal" text-anchor="start" >25.0</text>
<text x="349.00" y="450.84" font-size="15" fill="#202020" font-weight="normal" text-anchor="start" >L25_P0</text>
<rect x="476.80" y="440.44" width="10.00" height="10.00" fill="#fff" stroke="#d2d2d2" stroke-width="0.9" rx="0" />
<rect x="496.30" y="440.44" width="10.00" height="10.00" fill="#fff" stroke="#d2d2d2" stroke-width="0.9" rx="0" />
<rect x="515.90" y="440.44" width="10.00" height="10.00" fill="#fff" stroke="#d2d2d2" stroke-width="0.9" rx="0" />
<line x1="197.60" y1="474.06" x2="532.30" y2="474.06" stroke="#d4d4d4" stroke-width="1" />
<rect x="199.00" y="455.60" width="17.80" height="17.96" fill="#151515" stroke="none" stroke-width="1" rx="0" />
<rect x="200.30" y="457.40" width="14.50" height="14.36" fill="#ff0000" stroke="none" stroke-width="1" rx="0" />
<rect x="201.80" y="458.90" width="11.50" height="11.36" fill="url(#p_diag)" stroke="none" stroke-width="1" rx="0" />
<text x="221.00" y="469.80" font-size="15" fill="#202020" font-weight="normal" text-anchor="start" >26.0</text>
<text x="349.00" y="469.80" font-size="15" fill="#202020" font-weight="normal" text-anchor="start" >L26_P0</text>
<rect x="476.80" y="459.40" width="10.00" height="10.00" fill="#fff" stroke="#d2d2d2" stroke-width="0.9" rx="0" />
<rect x="496.30" y="459.40" width="10.00" height="10.00" fill="#fff" stroke="#d2d2d2" stroke-width="0.9" rx="0" />
<rect x="515.90" y="459.40" width="10.00" height="10.00" fill="#fff" stroke="#d2d2d2" stroke-width="0.9" rx="0" />
<line x1="197.60" y1="493.02" x2="532.30" y2="493.02" stroke="#d4d4d4" stroke-width="1" />
<rect x="199.00" y="474.56" width="17.80" height="17.96" fill="#151515" stroke="none" stroke-width="1" rx="0" />
<rect x="200.30" y="476.36" width="14.50" height="14.36" fill="#aaa600" stroke="none" stroke-width="1" rx="0" />
<rect x="201.80" y="477.86" width="11.50" height="11.36" fill="url(#p_diag)" stroke="none" stroke-width="1" rx="0" />
<text x="221.00" y="488.76" font-size="15" fill="#202020" font-weight="normal" text-anchor="start" >30.0</text>
<text x="349.00" y="488.76" font-size="15" fill="#202020" font-weight="normal" text-anchor="start" >L30_P0</text>
<rect x="476.80" y="478.36" width="10.00" height="10.00" fill="#fff" stroke="#d2d2d2" stroke-width="0.9" rx="0" />
<rect x="496.30" y="478.36" width="10.00" height="10.00" fill="#fff" stroke="#d2d2d2" stroke-width="0.9" rx="0" />
<rect x="515.90" y="478.36" width="10.00" height="10.00" fill="#fff" stroke="#d2d2d2" stroke-width="0.9" rx="0" />
<line x1="197.60" y1="511.98" x2="532.30" y2="511.98" stroke="#d4d4d4" stroke-width="1" />
<rect x="199.00" y="493.52" width="17.80" height="17.96" fill="#151515" stroke="none" stroke-width="1" rx="0" />
<rect x="200.30" y="495.32" width="14.50" height="14.36" fill="#aaa600" stroke="none" stroke-width="1" rx="0" />
<rect x="201.80" y="496.82" width="11.50" height="11.36" fill="url(#p_dense)" stroke="none" stroke-width="1" rx="0" />
<text x="221.00" y="507.72" font-size="15" fill="#202020" font-weight="normal" text-anchor="start" >30.11</text>
<text x="349.00" y="507.72" font-size="15" fill="#202020" font-weight="normal" text-anchor="start" >L30_P11</text>
<rect x="476.80" y="497.32" width="10.00" height="10.00" fill="#fff" stroke="#d2d2d2" stroke-width="0.9" rx="0" />
<rect x="496.30" y="497.32" width="10.00" height="10.00" fill="#fff" stroke="#d2d2d2" stroke-width="0.9" rx="0" />
<rect x="515.90" y="497.32" width="10.00" height="10.00" fill="#fff" stroke="#d2d2d2" stroke-width="0.9" rx="0" />
<line x1="197.60" y1="530.94" x2="532.30" y2="530.94" stroke="#d4d4d4" stroke-width="1" />
<rect x="199.00" y="512.48" width="17.80" height="17.96" fill="#151515" stroke="none" stroke-width="1" rx="0" />
<rect x="200.30" y="514.28" width="14.50" height="14.36" fill="#aaa600" stroke="none" stroke-width="1" rx="0" />
<rect x="201.80" y="515.78" width="11.50" height="11.36" fill="url(#p_vwave)" stroke="none" stroke-width="1" rx="0" />
<text x="221.00" y="526.68" font-size="15" fill="#202020" font-weight="normal" text-anchor="start" >30.12</text>
<text x="349.00" y="526.68" font-size="15" fill="#202020" font-weight="normal" text-anchor="start" >L30_P12</text>
<rect x="476.80" y="516.28" width="10.00" height="10.00" fill="#fff" stroke="#d2d2d2" stroke-width="0.9" rx="0" />
<rect x="496.30" y="516.28" width="10.00" height="10.00" fill="#fff" stroke="#d2d2d2" stroke-width="0.9" rx="0" />
<rect x="515.90" y="516.28" width="10.00" height="10.00" fill="#fff" stroke="#d2d2d2" stroke-width="0.9" rx="0" />
<line x1="197.60" y1="549.90" x2="532.30" y2="549.90" stroke="#d4d4d4" stroke-width="1" />
<rect x="199.00" y="531.44" width="17.80" height="17.96" fill="#151515" stroke="none" stroke-width="1" rx="0" />
<rect x="200.30" y="533.24" width="14.50" height="14.36" fill="#aaa600" stroke="none" stroke-width="1" rx="0" />
<rect x="201.80" y="534.74" width="11.50" height="11.36" fill="url(#p_grid)" stroke="none" stroke-width="1" rx="0" />
<text x="221.00" y="545.64" font-size="15" fill="#202020" font-weight="normal" text-anchor="start" >30.13</text>
<text x="349.00" y="545.64" font-size="15" fill="#202020" font-weight="normal" text-anchor="start" >L30_P13</text>
<rect x="476.80" y="535.24" width="10.00" height="10.00" fill="#fff" stroke="#d2d2d2" stroke-width="0.9" rx="0" />
<rect x="496.30" y="535.24" width="10.00" height="10.00" fill="#fff" stroke="#d2d2d2" stroke-width="0.9" rx="0" />
<rect x="515.90" y="535.24" width="10.00" height="10.00" fill="#fff" stroke="#d2d2d2" stroke-width="0.9" rx="0" />
<line x1="197.60" y1="568.86" x2="532.30" y2="568.86" stroke="#d4d4d4" stroke-width="1" />
<rect x="199.00" y="550.40" width="17.80" height="17.96" fill="#151515" stroke="none" stroke-width="1" rx="0" />
<rect x="200.30" y="552.20" width="14.50" height="14.36" fill="#aaa600" stroke="none" stroke-width="1" rx="0" />
<rect x="201.80" y="553.70" width="11.50" height="11.36" fill="url(#p_diag)" stroke="none" stroke-width="1" rx="0" />
<text x="221.00" y="564.60" font-size="15" fill="#202020" font-weight="normal" text-anchor="start" >30.14</text>
<text x="349.00" y="564.60" font-size="15" fill="#202020" font-weight="normal" text-anchor="start" >L30_P14</text>
<rect x="476.80" y="554.20" width="10.00" height="10.00" fill="#fff" stroke="#d2d2d2" stroke-width="0.9" rx="0" />
<rect x="496.30" y="554.20" width="10.00" height="10.00" fill="#fff" stroke="#d2d2d2" stroke-width="0.9" rx="0" />
<rect x="515.90" y="554.20" width="10.00" height="10.00" fill="#fff" stroke="#d2d2d2" stroke-width="0.9" rx="0" />
<line x1="197.60" y1="587.82" x2="532.30" y2="587.82" stroke="#d4d4d4" stroke-width="1" />
<rect x="199.00" y="569.36" width="17.80" height="17.96" fill="#151515" stroke="none" stroke-width="1" rx="0" />
<rect x="200.30" y="571.16" width="14.50" height="14.36" fill="#aaa600" stroke="none" stroke-width="1" rx="0" />
<rect x="201.80" y="572.66" width="11.50" height="11.36" fill="url(#p_diag2)" stroke="none" stroke-width="1" rx="0" />
<text x="221.00" y="583.56" font-size="15" fill="#202020" font-weight="normal" text-anchor="start" >30.15</text>
<text x="349.00" y="583.56" font-size="15" fill="#202020" font-weight="normal" text-anchor="start" >L30_P15</text>
<rect x="476.80" y="573.16" width="10.00" height="10.00" fill="#fff" stroke="#d2d2d2" stroke-width="0.9" rx="0" />
<rect x="496.30" y="573.16" width="10.00" height="10.00" fill="#fff" stroke="#d2d2d2" stroke-width="0.9" rx="0" />
<rect x="515.90" y="573.16" width="10.00" height="10.00" fill="#fff" stroke="#d2d2d2" stroke-width="0.9" rx="0" />
<line x1="197.60" y1="606.78" x2="532.30" y2="606.78" stroke="#d4d4d4" stroke-width="1" />
<rect x="199.00" y="588.32" width="17.80" height="17.96" fill="#151515" stroke="none" stroke-width="1" rx="0" />
<rect x="200.30" y="590.12" width="14.50" height="14.36" fill="#aaa600" stroke="none" stroke-width="1" rx="0" />
<rect x="201.80" y="591.62" width="11.50" height="11.36" fill="url(#p_dots)" stroke="none" stroke-width="1" rx="0" />
<text x="221.00" y="602.52" font-size="15" fill="#202020" font-weight="normal" text-anchor="start" >30.16</text>
<text x="349.00" y="602.52" font-size="15" fill="#202020" font-weight="normal" text-anchor="start" >L30_P16</text>
<rect x="476.80" y="592.12" width="10.00" height="10.00" fill="#fff" stroke="#d2d2d2" stroke-width="0.9" rx="0" />
<rect x="496.30" y="592.12" width="10.00" height="10.00" fill="#fff" stroke="#d2d2d2" stroke-width="0.9" rx="0" />
<rect x="515.90" y="592.12" width="10.00" height="10.00" fill="#fff" stroke="#d2d2d2" stroke-width="0.9" rx="0" />
<rect x="199.00" y="607.28" width="17.80" height="1.72" fill="#151515" stroke="none" stroke-width="1" rx="0" />
<rect x="365.00" y="611.00" width="1.00" height="1.50" fill="#c8c8c8" stroke="none" stroke-width="1" rx="0" />
<rect x="368.00" y="611.00" width="1.00" height="1.50" fill="#c8c8c8" stroke="none" stroke-width="1" rx="0" />
<rect x="371.00" y="611.00" width="1.00" height="1.50" fill="#c8c8c8" stroke="none" stroke-width="1" rx="0" />
<rect x="374.00" y="611.00" width="1.00" height="1.50" fill="#c8c8c8" stroke="none" stroke-width="1" rx="0" />
<rect x="377.00" y="611.00" width="1.00" height="1.50" fill="#c8c8c8" stroke="none" stroke-width="1" rx="0" />
<text x="199.00" y="631.40" font-size="14" fill="#202020" font-weight="normal" text-anchor="start" textLength="38.6" lengthAdjust="spacing" >Ruler</text>
<rect x="521.50" y="622.00" width="9.00" height="8.20" fill="none" stroke="#9a9a9a" stroke-width="0.9" rx="1.5" />
<path d="M523.5 625.5 L523.5 628.5 L527 628.5 L527 625.5 Z M525 625.5 L525 623.8 L529 623.8 L529 627" fill="none" stroke="#8a8a8a" stroke-width="0.8" />
<rect x="533.50" y="622.00" width="8.30" height="8.20" fill="none" stroke="#9a9a9a" stroke-width="0.9" rx="1.5" />
<path d="M535.5 624 L539.8 628.2 M539.8 624 L535.5 628.2" fill="none" stroke="#555" stroke-width="1" />
<rect x="198.40" y="637.80" width="345.60" height="236.00" fill="#fff" stroke="#d2d2d2" stroke-width="1" rx="4" />
<rect x="206.80" y="645.80" width="328.60" height="95.70" fill="#fff" stroke="#d0d0d0" stroke-width="1" rx="3" />
<rect x="214.30" y="659.50" width="10.30" height="10.00" fill="#fff" stroke="#7a7af5" stroke-width="1" rx="0" />
<path d="M216.3 664.3 L218.8 666.8 L222.8 662" fill="none" stroke="#0000c8" stroke-width="1.7" />
<text x="229.50" y="669.60" font-size="15" fill="#202020" font-weight="normal" text-anchor="start" textLength="50" lengthAdjust="spacing" >45-deg</text>
<rect x="214.30" y="687.10" width="10.30" height="10.00" fill="#fff" stroke="#7a7af5" stroke-width="1" rx="0" />
<text x="229.50" y="697.40" font-size="15" fill="#202020" font-weight="normal" text-anchor="start" textLength="57" lengthAdjust="spacing" >unmark</text>
<rect x="374.30" y="659.50" width="10.30" height="10.00" fill="#fff" stroke="#7a7af5" stroke-width="1" rx="0" />
<path d="M376.3 664.3 L378.8 666.8 L382.8 662" fill="none" stroke="#0000c8" stroke-width="1.7" />
<text x="389.50" y="669.60" font-size="15" fill="#202020" font-weight="normal" text-anchor="start" textLength="57.5" lengthAdjust="spacing" >snaping</text>
<rect x="374.30" y="687.10" width="10.30" height="10.00" fill="#fff" stroke="#7a7af5" stroke-width="1" rx="0" />
<path d="M376.3 691.9 L378.8 694.4 L382.8 689.6" fill="none" stroke="#0000c8" stroke-width="1.7" />
<text x="389.50" y="697.40" font-size="15" fill="#202020" font-weight="normal" text-anchor="start" textLength="80" lengthAdjust="spacing" >manhattan</text>
<text x="214.50" y="726.90" font-size="15" fill="#202020" font-weight="normal" text-anchor="start" textLength="35.5" lengthAdjust="spacing" >units</text>
<rect x="255.50" y="707.80" width="47.00" height="26.80" fill="#fff" stroke="#cfcfcf" stroke-width="1" rx="3" />
<text x="258.50" y="726.90" font-size="15" fill="#202020" font-weight="normal" text-anchor="start" >um</text>
<path d="M290.3 719.5 L297 719.5 L293.65 723.3 Z" fill="#0000d0" stroke="none" stroke-width="1" />
<text x="374.50" y="726.90" font-size="15" fill="#202020" font-weight="normal" text-anchor="start" textLength="94.5" lengthAdjust="spacing" >digit capacity</text>
<rect x="475.50" y="707.80" width="27.00" height="26.80" fill="#fff" stroke="#cfcfcf" stroke-width="1" rx="3" />
<text x="476.50" y="726.90" font-size="15" fill="#202020" font-weight="normal" text-anchor="start" >4</text>
<path d="M490.3 719.5 L497 719.5 L493.65 723.3 Z" fill="#0000d0" stroke="none" stroke-width="1" />
<rect x="206.80" y="747.70" width="265.90" height="119.00" fill="#fff" stroke="#cfcfcf" stroke-width="1" rx="0" />
<line x1="206.80" y1="774.40" x2="471.50" y2="774.40" stroke="#cfcfcf" stroke-width="1" />
<line x1="206.80" y1="801.30" x2="471.50" y2="801.30" stroke="#d4d4d4" stroke-width="1" />
<line x1="206.80" y1="828.20" x2="471.50" y2="828.20" stroke="#d4d4d4" stroke-width="1" />
<line x1="206.80" y1="854.10" x2="471.50" y2="854.10" stroke="#d4d4d4" stroke-width="1" />
<line x1="227.70" y1="747.70" x2="227.70" y2="854.10" stroke="#d4d4d4" stroke-width="1" />
<line x1="309.50" y1="747.70" x2="309.50" y2="854.10" stroke="#d4d4d4" stroke-width="1" />
<line x1="471.50" y1="747.70" x2="471.50" y2="866.60" stroke="#d8d8d8" stroke-width="1.5" />
<text x="268.00" y="766.90" font-size="15" fill="#202020" font-weight="normal" text-anchor="middle" >Start</text>
<text x="390.70" y="766.90" font-size="15" fill="#202020" font-weight="normal" text-anchor="middle" >End</text>
<circle cx="216.9" cy="761.5" r="6.8" fill="none" stroke="#e02020" stroke-width="1.6"/>
<path d="M214 758.6 L219.8 764.4 M219.8 758.6 L214 764.4" fill="none" stroke="#e02020" stroke-width="1.7" />
<rect x="210.00" y="780.90" width="14.30" height="1.60" fill="#2020d8" stroke="none" stroke-width="1" rx="0" />
<rect x="215.30" y="779.70" width="3.80" height="1.40" fill="#2020d8" stroke="none" stroke-width="1" rx="0" />
<rect x="211.60" y="783.70" width="11.00" height="11.50" fill="none" stroke="#2020d8" stroke-width="1.5" rx="0" />
<rect x="214.60" y="785.90" width="1.40" height="7.50" fill="#2020d8" stroke="none" stroke-width="1" rx="0" />
<rect x="218.20" y="785.90" width="1.40" height="7.50" fill="#2020d8" stroke="none" stroke-width="1" rx="0" />
<text x="230.50" y="793.40" font-size="15" fill="#202020" font-weight="normal" text-anchor="start" textLength="69" lengthAdjust="spacing" >1511.37...</text>
<text x="313.50" y="793.40" font-size="15" fill="#202020" font-weight="normal" text-anchor="start" textLength="152" lengthAdjust="spacing" >1511.8550, 2899.02...</text>
<rect x="210.00" y="807.80" width="14.30" height="1.60" fill="#2020d8" stroke="none" stroke-width="1" rx="0" />
<rect x="215.30" y="806.60" width="3.80" height="1.40" fill="#2020d8" stroke="none" stroke-width="1" rx="0" />
<rect x="211.60" y="810.60" width="11.00" height="11.50" fill="none" stroke="#2020d8" stroke-width="1.5" rx="0" />
<rect x="214.60" y="812.80" width="1.40" height="7.50" fill="#2020d8" stroke="none" stroke-width="1" rx="0" />
<rect x="218.20" y="812.80" width="1.40" height="7.50" fill="#2020d8" stroke="none" stroke-width="1" rx="0" />
<text x="230.50" y="820.30" font-size="15" fill="#202020" font-weight="normal" text-anchor="start" textLength="69" lengthAdjust="spacing" >1511.37...</text>
<text x="313.50" y="820.30" font-size="15" fill="#202020" font-weight="normal" text-anchor="start" textLength="152" lengthAdjust="spacing" >1511.3750, 2898.53...</text>
<rect x="210.00" y="834.70" width="14.30" height="1.60" fill="#2020d8" stroke="none" stroke-width="1" rx="0" />
<rect x="215.30" y="833.50" width="3.80" height="1.40" fill="#2020d8" stroke="none" stroke-width="1" rx="0" />
<rect x="211.60" y="837.50" width="11.00" height="11.50" fill="none" stroke="#2020d8" stroke-width="1.5" rx="0" />
<rect x="214.60" y="839.70" width="1.40" height="7.50" fill="#2020d8" stroke="none" stroke-width="1" rx="0" />
<rect x="218.20" y="839.70" width="1.40" height="7.50" fill="#2020d8" stroke="none" stroke-width="1" rx="0" />
<text x="230.50" y="847.20" font-size="15" fill="#202020" font-weight="normal" text-anchor="start" textLength="69" lengthAdjust="spacing" >1511.23...</text>
<text x="313.50" y="847.20" font-size="15" fill="#202020" font-weight="normal" text-anchor="start" textLength="152" lengthAdjust="spacing" >1511.8550, 2899.19...</text>
<rect x="478.60" y="747.70" width="56.80" height="25.80" fill="#fff" stroke="#cccccc" stroke-width="1" rx="4" />
<text x="507.00" y="766.70" font-size="15" fill="#202020" font-weight="normal" text-anchor="middle" >Clear</text>
<rect x="478.60" y="778.90" width="56.80" height="25.80" fill="#fff" stroke="#cccccc" stroke-width="1" rx="4" />
<text x="507.00" y="797.90" font-size="15" fill="#202020" font-weight="normal" text-anchor="middle" >Delete</text>
<rect x="478.60" y="809.50" width="56.80" height="25.80" fill="#fff" stroke="#cccccc" stroke-width="1" rx="4" />
<text x="507.00" y="828.50" font-size="15" fill="#202020" font-weight="normal" text-anchor="middle" >Load</text>
<rect x="478.60" y="840.20" width="56.80" height="25.80" fill="#fff" stroke="#cccccc" stroke-width="1" rx="4" />
<text x="507.00" y="859.20" font-size="15" fill="#202020" font-weight="normal" text-anchor="middle" >Save</text>
<text x="202.10" y="893.90" font-size="15" fill="#202020" font-weight="normal" text-anchor="start" textLength="33.7" lengthAdjust="spacing" >[1/3]</text>
<text x="241.20" y="893.90" font-size="15" fill="#ee1111" font-weight="bold" text-anchor="start" textLength="41.9" lengthAdjust="spacing" >TYPE:</text>
<text x="282.30" y="893.90" font-size="15" fill="#202020" font-weight="normal" text-anchor="start" textLength="32.3" lengthAdjust="spacing" >Rect</text>
<text x="318.20" y="893.90" font-size="15" fill="#ee1111" font-weight="bold" text-anchor="start" textLength="48.7" lengthAdjust="spacing" >BBOX:</text>
<text x="366.90" y="893.90" font-size="15" fill="#202020" font-weight="normal" text-anchor="start" textLength="325.2" lengthAdjust="spacing" >(1511.6950,2898.4700;1511.7650,2898.9400)</text>
<text x="695.90" y="893.90" font-size="15" fill="#ee1111" font-weight="bold" text-anchor="start" textLength="33.3" lengthAdjust="spacing" >LPP:</text>
<text x="728.60" y="893.90" font-size="15" fill="#202020" font-weight="normal" text-anchor="start" textLength="40.7" lengthAdjust="spacing" >(31,0)</text>
<text x="772.70" y="893.90" font-size="15" fill="#ee1111" font-weight="bold" text-anchor="start" textLength="50.3" lengthAdjust="spacing" >LEVEL:</text>
<text x="822.80" y="893.90" font-size="15" fill="#202020" font-weight="normal" text-anchor="start" textLength="9.7" lengthAdjust="spacing" >5</text>
<text x="835.90" y="893.90" font-size="15" fill="#ee1111" font-weight="bold" text-anchor="start" textLength="30.7" lengthAdjust="spacing" >ON:</text>
<text x="866.20" y="893.90" font-size="15" fill="#202020" font-weight="normal" text-anchor="start" textLength="181.4" lengthAdjust="spacing" >RAS8192X64DPTH_CM16</text>
<text x="1341.00" y="893.90" font-size="15" fill="#202020" font-weight="normal" text-anchor="start" textLength="211.5" lengthAdjust="spacing" xml:space="preserve">X;Y:  (1511722, 2898927) dbu</text>
<clipPath id="cv"><rect x="549" y="179.5" width="1003" height="694.5"/></clipPath>
<rect x="549" y="179.5" width="1003" height="694.5" fill="#000"/>
<g clip-path="url(#cv)">
<rect x="540.5" y="195.5" width="185.0" height="37.0" fill="url(#hatch)"/>
<rect x="540.5" y="195.5" width="185.0" height="37.0" fill="none" stroke="#dc9200" stroke-width="1"/>
<line x1="582.50" y1="195.50" x2="582.50" y2="232.50" stroke="#dc9200" stroke-width="1" />
<line x1="679.50" y1="195.50" x2="679.50" y2="232.50" stroke="#dc9200" stroke-width="1" />
<path d="M777.5 170 H815.5 V310.5 H657.5 V720.5 H619.5 V274.5 H777.5 Z" fill="url(#hatch)" stroke="none" stroke-width="1" />
<path d="M777.5 170 H815.5 V310.5 H657.5 V720.5 H619.5 V274.5 H777.5 Z" fill="none" stroke="#dc9200" stroke-width="1" />
<rect x="619.5" y="404.5" width="38.0" height="11.0" fill="none" stroke="#dc9200" stroke-width="1"/>
<line x1="619.50" y1="434.50" x2="657.50" y2="434.50" stroke="#dc9200" stroke-width="1" />
<line x1="619.50" y1="592.50" x2="657.50" y2="592.50" stroke="#dc9200" stroke-width="1" />
<rect x="716.5" y="412.5" width="45.0" height="356.0" fill="url(#hatch)"/>
<rect x="716.5" y="412.5" width="45.0" height="356.0" fill="none" stroke="#dc9200" stroke-width="1"/>
<rect x="721" y="434" width="39.5" height="232" fill="none" stroke="#dc9200" stroke-width="1"/>
<line x1="721.00" y1="573.30" x2="760.50" y2="573.30" stroke="#dc9200" stroke-width="1" />
<line x1="716.50" y1="592.50" x2="761.50" y2="592.50" stroke="#dc9200" stroke-width="1" />
<rect x="540.5" y="412.5" width="19.0" height="354.0" fill="url(#hatch)"/>
<rect x="540.5" y="412.5" width="19.0" height="354.0" fill="none" stroke="#dc9200" stroke-width="1"/>
<line x1="540.00" y1="434.50" x2="559.50" y2="434.50" stroke="#dc9200" stroke-width="1" />
<line x1="540.00" y1="573.50" x2="559.50" y2="573.50" stroke="#dc9200" stroke-width="1" />
<line x1="540.00" y1="591.50" x2="559.50" y2="591.50" stroke="#dc9200" stroke-width="1" />
<line x1="540.00" y1="665.50" x2="559.50" y2="665.50" stroke="#dc9200" stroke-width="1" />
<line x1="556.50" y1="434.50" x2="556.50" y2="665.50" stroke="#dc9200" stroke-width="1" />
<rect x="604.5" y="720.5" width="69.0" height="122.0" fill="url(#hatch)"/>
<rect x="604.5" y="720.5" width="69.0" height="122.0" fill="none" stroke="#dc9200" stroke-width="1"/>
<rect x="619.5" y="735.5" width="39.0" height="93.0" fill="none" stroke="#dc9200" stroke-width="1"/>
<line x1="619.50" y1="771.50" x2="658.50" y2="771.50" stroke="#dc9200" stroke-width="1" />
<line x1="619.50" y1="796.50" x2="658.50" y2="796.50" stroke="#dc9200" stroke-width="1" />
<rect x="995.5" y="170" width="69.0" height="59.5" fill="url(#hatch)"/>
<rect x="995.5" y="170" width="69.0" height="59.5" fill="none" stroke="#dc9200" stroke-width="1"/>
<rect x="1003.5" y="170" width="53.0" height="43.5" fill="none" stroke="#dc9200" stroke-width="1"/>
<rect x="1124.5" y="170" width="45.0" height="710" fill="url(#hatch)"/>
<rect x="1124.5" y="170" width="45.0" height="710" fill="none" stroke="#dc9200" stroke-width="1"/>
<rect x="996.5" y="429.5" width="68.0" height="432.0" fill="url(#hatch)"/>
<rect x="996.5" y="429.5" width="68.0" height="432.0" fill="none" stroke="#dc9200" stroke-width="1"/>
<rect x="1011.5" y="746.5" width="39.0" height="93.0" fill="none" stroke="#dc9200" stroke-width="1"/>
<rect x="1002.5" y="472.5" width="53.0" height="338.0" fill="none" stroke="#ffffff" stroke-width="1.6"/>
<rect x="1217.5" y="430.5" width="84.0" height="416.0" fill="url(#hatch)"/>
<rect x="1217.5" y="430.5" width="84.0" height="416.0" fill="none" stroke="#dc9200" stroke-width="1"/>
<rect x="1232.5" y="472.5" width="54.0" height="339.0" fill="none" stroke="#dc9200" stroke-width="1"/>
<rect x="1240.5" y="746.5" width="39.0" height="93.0" fill="none" stroke="#dc9200" stroke-width="1"/>
<rect x="1526.5" y="483.5" width="43.5" height="396.5" fill="url(#hatch)"/>
<rect x="1526.5" y="483.5" width="43.5" height="396.5" fill="none" stroke="#dc9200" stroke-width="1"/>
<rect x="1534.5" y="573.5" width="35.5" height="93.0" fill="none" stroke="#dc9200" stroke-width="1"/>
<rect x="554.30" y="212.80" width="2.00" height="1.00" fill="#9a9a9a" stroke="none" stroke-width="1" rx="0" />
<rect x="554.30" y="285.00" width="2.00" height="1.00" fill="#9a9a9a" stroke="none" stroke-width="1" rx="0" />
<rect x="554.30" y="357.20" width="2.00" height="1.00" fill="#9a9a9a" stroke="none" stroke-width="1" rx="0" />
<rect x="554.30" y="429.40" width="2.00" height="1.00" fill="#9a9a9a" stroke="none" stroke-width="1" rx="0" />
<rect x="554.30" y="501.60" width="2.00" height="1.00" fill="#9a9a9a" stroke="none" stroke-width="1" rx="0" />
<rect x="554.30" y="573.80" width="2.00" height="1.00" fill="#9a9a9a" stroke="none" stroke-width="1" rx="0" />
<rect x="554.30" y="646.00" width="2.00" height="1.00" fill="#9a9a9a" stroke="none" stroke-width="1" rx="0" />
<rect x="554.30" y="718.20" width="2.00" height="1.00" fill="#9a9a9a" stroke="none" stroke-width="1" rx="0" />
<rect x="554.30" y="790.40" width="2.00" height="1.00" fill="#9a9a9a" stroke="none" stroke-width="1" rx="0" />
<rect x="554.30" y="862.60" width="2.00" height="1.00" fill="#9a9a9a" stroke="none" stroke-width="1" rx="0" />
<rect x="629.65" y="212.80" width="2.00" height="1.00" fill="#9a9a9a" stroke="none" stroke-width="1" rx="0" />
<rect x="629.65" y="285.00" width="2.00" height="1.00" fill="#9a9a9a" stroke="none" stroke-width="1" rx="0" />
<rect x="629.65" y="357.20" width="2.00" height="1.00" fill="#9a9a9a" stroke="none" stroke-width="1" rx="0" />
<rect x="629.65" y="429.40" width="2.00" height="1.00" fill="#9a9a9a" stroke="none" stroke-width="1" rx="0" />
<rect x="629.65" y="501.60" width="2.00" height="1.00" fill="#9a9a9a" stroke="none" stroke-width="1" rx="0" />
<rect x="629.65" y="573.80" width="2.00" height="1.00" fill="#9a9a9a" stroke="none" stroke-width="1" rx="0" />
<rect x="629.65" y="646.00" width="2.00" height="1.00" fill="#9a9a9a" stroke="none" stroke-width="1" rx="0" />
<rect x="629.65" y="718.20" width="2.00" height="1.00" fill="#9a9a9a" stroke="none" stroke-width="1" rx="0" />
<rect x="629.65" y="790.40" width="2.00" height="1.00" fill="#9a9a9a" stroke="none" stroke-width="1" rx="0" />
<rect x="629.65" y="862.60" width="2.00" height="1.00" fill="#9a9a9a" stroke="none" stroke-width="1" rx="0" />
<rect x="705.00" y="212.80" width="2.00" height="1.00" fill="#9a9a9a" stroke="none" stroke-width="1" rx="0" />
<rect x="705.00" y="285.00" width="2.00" height="1.00" fill="#9a9a9a" stroke="none" stroke-width="1" rx="0" />
<rect x="705.00" y="357.20" width="2.00" height="1.00" fill="#9a9a9a" stroke="none" stroke-width="1" rx="0" />
<rect x="705.00" y="429.40" width="2.00" height="1.00" fill="#9a9a9a" stroke="none" stroke-width="1" rx="0" />
<rect x="705.00" y="501.60" width="2.00" height="1.00" fill="#9a9a9a" stroke="none" stroke-width="1" rx="0" />
<rect x="705.00" y="573.80" width="2.00" height="1.00" fill="#9a9a9a" stroke="none" stroke-width="1" rx="0" />
<rect x="705.00" y="646.00" width="2.00" height="1.00" fill="#9a9a9a" stroke="none" stroke-width="1" rx="0" />
<rect x="705.00" y="718.20" width="2.00" height="1.00" fill="#9a9a9a" stroke="none" stroke-width="1" rx="0" />
<rect x="705.00" y="790.40" width="2.00" height="1.00" fill="#9a9a9a" stroke="none" stroke-width="1" rx="0" />
<rect x="705.00" y="862.60" width="2.00" height="1.00" fill="#9a9a9a" stroke="none" stroke-width="1" rx="0" />
<rect x="780.35" y="212.80" width="2.00" height="1.00" fill="#9a9a9a" stroke="none" stroke-width="1" rx="0" />
<rect x="780.35" y="285.00" width="2.00" height="1.00" fill="#9a9a9a" stroke="none" stroke-width="1" rx="0" />
<rect x="780.35" y="357.20" width="2.00" height="1.00" fill="#9a9a9a" stroke="none" stroke-width="1" rx="0" />
<rect x="780.35" y="429.40" width="2.00" height="1.00" fill="#9a9a9a" stroke="none" stroke-width="1" rx="0" />
<rect x="780.35" y="501.60" width="2.00" height="1.00" fill="#9a9a9a" stroke="none" stroke-width="1" rx="0" />
<rect x="780.35" y="573.80" width="2.00" height="1.00" fill="#9a9a9a" stroke="none" stroke-width="1" rx="0" />
<rect x="780.35" y="646.00" width="2.00" height="1.00" fill="#9a9a9a" stroke="none" stroke-width="1" rx="0" />
<rect x="780.35" y="718.20" width="2.00" height="1.00" fill="#9a9a9a" stroke="none" stroke-width="1" rx="0" />
<rect x="780.35" y="790.40" width="2.00" height="1.00" fill="#9a9a9a" stroke="none" stroke-width="1" rx="0" />
<rect x="780.35" y="862.60" width="2.00" height="1.00" fill="#9a9a9a" stroke="none" stroke-width="1" rx="0" />
<rect x="855.70" y="212.80" width="2.00" height="1.00" fill="#9a9a9a" stroke="none" stroke-width="1" rx="0" />
<rect x="855.70" y="285.00" width="2.00" height="1.00" fill="#9a9a9a" stroke="none" stroke-width="1" rx="0" />
<rect x="855.70" y="357.20" width="2.00" height="1.00" fill="#9a9a9a" stroke="none" stroke-width="1" rx="0" />
<rect x="855.70" y="429.40" width="2.00" height="1.00" fill="#9a9a9a" stroke="none" stroke-width="1" rx="0" />
<rect x="855.70" y="501.60" width="2.00" height="1.00" fill="#9a9a9a" stroke="none" stroke-width="1" rx="0" />
<rect x="855.70" y="573.80" width="2.00" height="1.00" fill="#9a9a9a" stroke="none" stroke-width="1" rx="0" />
<rect x="855.70" y="646.00" width="2.00" height="1.00" fill="#9a9a9a" stroke="none" stroke-width="1" rx="0" />
<rect x="855.70" y="718.20" width="2.00" height="1.00" fill="#9a9a9a" stroke="none" stroke-width="1" rx="0" />
<rect x="855.70" y="790.40" width="2.00" height="1.00" fill="#9a9a9a" stroke="none" stroke-width="1" rx="0" />
<rect x="855.70" y="862.60" width="2.00" height="1.00" fill="#9a9a9a" stroke="none" stroke-width="1" rx="0" />
<rect x="931.05" y="212.80" width="2.00" height="1.00" fill="#9a9a9a" stroke="none" stroke-width="1" rx="0" />
<rect x="931.05" y="285.00" width="2.00" height="1.00" fill="#9a9a9a" stroke="none" stroke-width="1" rx="0" />
<rect x="931.05" y="357.20" width="2.00" height="1.00" fill="#9a9a9a" stroke="none" stroke-width="1" rx="0" />
<rect x="931.05" y="429.40" width="2.00" height="1.00" fill="#9a9a9a" stroke="none" stroke-width="1" rx="0" />
<rect x="931.05" y="501.60" width="2.00" height="1.00" fill="#9a9a9a" stroke="none" stroke-width="1" rx="0" />
<rect x="931.05" y="573.80" width="2.00" height="1.00" fill="#9a9a9a" stroke="none" stroke-width="1" rx="0" />
<rect x="931.05" y="646.00" width="2.00" height="1.00" fill="#9a9a9a" stroke="none" stroke-width="1" rx="0" />
<rect x="931.05" y="718.20" width="2.00" height="1.00" fill="#9a9a9a" stroke="none" stroke-width="1" rx="0" />
<rect x="931.05" y="790.40" width="2.00" height="1.00" fill="#9a9a9a" stroke="none" stroke-width="1" rx="0" />
<rect x="931.05" y="862.60" width="2.00" height="1.00" fill="#9a9a9a" stroke="none" stroke-width="1" rx="0" />
<rect x="1006.40" y="212.80" width="2.00" height="1.00" fill="#9a9a9a" stroke="none" stroke-width="1" rx="0" />
<rect x="1006.40" y="285.00" width="2.00" height="1.00" fill="#9a9a9a" stroke="none" stroke-width="1" rx="0" />
<rect x="1006.40" y="357.20" width="2.00" height="1.00" fill="#9a9a9a" stroke="none" stroke-width="1" rx="0" />
<rect x="1006.40" y="429.40" width="2.00" height="1.00" fill="#9a9a9a" stroke="none" stroke-width="1" rx="0" />
<rect x="1006.40" y="501.60" width="2.00" height="1.00" fill="#9a9a9a" stroke="none" stroke-width="1" rx="0" />
<rect x="1006.40" y="573.80" width="2.00" height="1.00" fill="#9a9a9a" stroke="none" stroke-width="1" rx="0" />
<rect x="1006.40" y="646.00" width="2.00" height="1.00" fill="#9a9a9a" stroke="none" stroke-width="1" rx="0" />
<rect x="1006.40" y="718.20" width="2.00" height="1.00" fill="#9a9a9a" stroke="none" stroke-width="1" rx="0" />
<rect x="1006.40" y="790.40" width="2.00" height="1.00" fill="#9a9a9a" stroke="none" stroke-width="1" rx="0" />
<rect x="1006.40" y="862.60" width="2.00" height="1.00" fill="#9a9a9a" stroke="none" stroke-width="1" rx="0" />
<rect x="1081.75" y="212.80" width="2.00" height="1.00" fill="#9a9a9a" stroke="none" stroke-width="1" rx="0" />
<rect x="1081.75" y="285.00" width="2.00" height="1.00" fill="#9a9a9a" stroke="none" stroke-width="1" rx="0" />
<rect x="1081.75" y="357.20" width="2.00" height="1.00" fill="#9a9a9a" stroke="none" stroke-width="1" rx="0" />
<rect x="1081.75" y="429.40" width="2.00" height="1.00" fill="#9a9a9a" stroke="none" stroke-width="1" rx="0" />
<rect x="1081.75" y="501.60" width="2.00" height="1.00" fill="#9a9a9a" stroke="none" stroke-width="1" rx="0" />
<rect x="1081.75" y="573.80" width="2.00" height="1.00" fill="#9a9a9a" stroke="none" stroke-width="1" rx="0" />
<rect x="1081.75" y="646.00" width="2.00" height="1.00" fill="#9a9a9a" stroke="none" stroke-width="1" rx="0" />
<rect x="1081.75" y="718.20" width="2.00" height="1.00" fill="#9a9a9a" stroke="none" stroke-width="1" rx="0" />
<rect x="1081.75" y="790.40" width="2.00" height="1.00" fill="#9a9a9a" stroke="none" stroke-width="1" rx="0" />
<rect x="1081.75" y="862.60" width="2.00" height="1.00" fill="#9a9a9a" stroke="none" stroke-width="1" rx="0" />
<rect x="1157.10" y="212.80" width="2.00" height="1.00" fill="#9a9a9a" stroke="none" stroke-width="1" rx="0" />
<rect x="1157.10" y="285.00" width="2.00" height="1.00" fill="#9a9a9a" stroke="none" stroke-width="1" rx="0" />
<rect x="1157.10" y="357.20" width="2.00" height="1.00" fill="#9a9a9a" stroke="none" stroke-width="1" rx="0" />
<rect x="1157.10" y="429.40" width="2.00" height="1.00" fill="#9a9a9a" stroke="none" stroke-width="1" rx="0" />
<rect x="1157.10" y="501.60" width="2.00" height="1.00" fill="#9a9a9a" stroke="none" stroke-width="1" rx="0" />
<rect x="1157.10" y="573.80" width="2.00" height="1.00" fill="#9a9a9a" stroke="none" stroke-width="1" rx="0" />
<rect x="1157.10" y="646.00" width="2.00" height="1.00" fill="#9a9a9a" stroke="none" stroke-width="1" rx="0" />
<rect x="1157.10" y="718.20" width="2.00" height="1.00" fill="#9a9a9a" stroke="none" stroke-width="1" rx="0" />
<rect x="1157.10" y="790.40" width="2.00" height="1.00" fill="#9a9a9a" stroke="none" stroke-width="1" rx="0" />
<rect x="1157.10" y="862.60" width="2.00" height="1.00" fill="#9a9a9a" stroke="none" stroke-width="1" rx="0" />
<rect x="1232.45" y="212.80" width="2.00" height="1.00" fill="#9a9a9a" stroke="none" stroke-width="1" rx="0" />
<rect x="1232.45" y="285.00" width="2.00" height="1.00" fill="#9a9a9a" stroke="none" stroke-width="1" rx="0" />
<rect x="1232.45" y="357.20" width="2.00" height="1.00" fill="#9a9a9a" stroke="none" stroke-width="1" rx="0" />
<rect x="1232.45" y="429.40" width="2.00" height="1.00" fill="#9a9a9a" stroke="none" stroke-width="1" rx="0" />
<rect x="1232.45" y="501.60" width="2.00" height="1.00" fill="#9a9a9a" stroke="none" stroke-width="1" rx="0" />
<rect x="1232.45" y="573.80" width="2.00" height="1.00" fill="#9a9a9a" stroke="none" stroke-width="1" rx="0" />
<rect x="1232.45" y="646.00" width="2.00" height="1.00" fill="#9a9a9a" stroke="none" stroke-width="1" rx="0" />
<rect x="1232.45" y="718.20" width="2.00" height="1.00" fill="#9a9a9a" stroke="none" stroke-width="1" rx="0" />
<rect x="1232.45" y="790.40" width="2.00" height="1.00" fill="#9a9a9a" stroke="none" stroke-width="1" rx="0" />
<rect x="1232.45" y="862.60" width="2.00" height="1.00" fill="#9a9a9a" stroke="none" stroke-width="1" rx="0" />
<rect x="1307.80" y="212.80" width="2.00" height="1.00" fill="#9a9a9a" stroke="none" stroke-width="1" rx="0" />
<rect x="1307.80" y="285.00" width="2.00" height="1.00" fill="#9a9a9a" stroke="none" stroke-width="1" rx="0" />
<rect x="1307.80" y="357.20" width="2.00" height="1.00" fill="#9a9a9a" stroke="none" stroke-width="1" rx="0" />
<rect x="1307.80" y="429.40" width="2.00" height="1.00" fill="#9a9a9a" stroke="none" stroke-width="1" rx="0" />
<rect x="1307.80" y="501.60" width="2.00" height="1.00" fill="#9a9a9a" stroke="none" stroke-width="1" rx="0" />
<rect x="1307.80" y="573.80" width="2.00" height="1.00" fill="#9a9a9a" stroke="none" stroke-width="1" rx="0" />
<rect x="1307.80" y="646.00" width="2.00" height="1.00" fill="#9a9a9a" stroke="none" stroke-width="1" rx="0" />
<rect x="1307.80" y="718.20" width="2.00" height="1.00" fill="#9a9a9a" stroke="none" stroke-width="1" rx="0" />
<rect x="1307.80" y="790.40" width="2.00" height="1.00" fill="#9a9a9a" stroke="none" stroke-width="1" rx="0" />
<rect x="1307.80" y="862.60" width="2.00" height="1.00" fill="#9a9a9a" stroke="none" stroke-width="1" rx="0" />
<rect x="1383.15" y="212.80" width="2.00" height="1.00" fill="#9a9a9a" stroke="none" stroke-width="1" rx="0" />
<rect x="1383.15" y="285.00" width="2.00" height="1.00" fill="#9a9a9a" stroke="none" stroke-width="1" rx="0" />
<rect x="1383.15" y="357.20" width="2.00" height="1.00" fill="#9a9a9a" stroke="none" stroke-width="1" rx="0" />
<rect x="1383.15" y="429.40" width="2.00" height="1.00" fill="#9a9a9a" stroke="none" stroke-width="1" rx="0" />
<rect x="1383.15" y="501.60" width="2.00" height="1.00" fill="#9a9a9a" stroke="none" stroke-width="1" rx="0" />
<rect x="1383.15" y="573.80" width="2.00" height="1.00" fill="#9a9a9a" stroke="none" stroke-width="1" rx="0" />
<rect x="1383.15" y="646.00" width="2.00" height="1.00" fill="#9a9a9a" stroke="none" stroke-width="1" rx="0" />
<rect x="1383.15" y="718.20" width="2.00" height="1.00" fill="#9a9a9a" stroke="none" stroke-width="1" rx="0" />
<rect x="1383.15" y="790.40" width="2.00" height="1.00" fill="#9a9a9a" stroke="none" stroke-width="1" rx="0" />
<rect x="1383.15" y="862.60" width="2.00" height="1.00" fill="#9a9a9a" stroke="none" stroke-width="1" rx="0" />
<rect x="1458.50" y="212.80" width="2.00" height="1.00" fill="#9a9a9a" stroke="none" stroke-width="1" rx="0" />
<rect x="1458.50" y="285.00" width="2.00" height="1.00" fill="#9a9a9a" stroke="none" stroke-width="1" rx="0" />
<rect x="1458.50" y="357.20" width="2.00" height="1.00" fill="#9a9a9a" stroke="none" stroke-width="1" rx="0" />
<rect x="1458.50" y="429.40" width="2.00" height="1.00" fill="#9a9a9a" stroke="none" stroke-width="1" rx="0" />
<rect x="1458.50" y="501.60" width="2.00" height="1.00" fill="#9a9a9a" stroke="none" stroke-width="1" rx="0" />
<rect x="1458.50" y="573.80" width="2.00" height="1.00" fill="#9a9a9a" stroke="none" stroke-width="1" rx="0" />
<rect x="1458.50" y="646.00" width="2.00" height="1.00" fill="#9a9a9a" stroke="none" stroke-width="1" rx="0" />
<rect x="1458.50" y="718.20" width="2.00" height="1.00" fill="#9a9a9a" stroke="none" stroke-width="1" rx="0" />
<rect x="1458.50" y="790.40" width="2.00" height="1.00" fill="#9a9a9a" stroke="none" stroke-width="1" rx="0" />
<rect x="1458.50" y="862.60" width="2.00" height="1.00" fill="#9a9a9a" stroke="none" stroke-width="1" rx="0" />
<rect x="1533.85" y="212.80" width="2.00" height="1.00" fill="#9a9a9a" stroke="none" stroke-width="1" rx="0" />
<rect x="1533.85" y="285.00" width="2.00" height="1.00" fill="#9a9a9a" stroke="none" stroke-width="1" rx="0" />
<rect x="1533.85" y="357.20" width="2.00" height="1.00" fill="#9a9a9a" stroke="none" stroke-width="1" rx="0" />
<rect x="1533.85" y="429.40" width="2.00" height="1.00" fill="#9a9a9a" stroke="none" stroke-width="1" rx="0" />
<rect x="1533.85" y="501.60" width="2.00" height="1.00" fill="#9a9a9a" stroke="none" stroke-width="1" rx="0" />
<rect x="1533.85" y="573.80" width="2.00" height="1.00" fill="#9a9a9a" stroke="none" stroke-width="1" rx="0" />
<rect x="1533.85" y="646.00" width="2.00" height="1.00" fill="#9a9a9a" stroke="none" stroke-width="1" rx="0" />
<rect x="1533.85" y="718.20" width="2.00" height="1.00" fill="#9a9a9a" stroke="none" stroke-width="1" rx="0" />
<rect x="1533.85" y="790.40" width="2.00" height="1.00" fill="#9a9a9a" stroke="none" stroke-width="1" rx="0" />
<rect x="1533.85" y="862.60" width="2.00" height="1.00" fill="#9a9a9a" stroke="none" stroke-width="1" rx="0" />
<line x1="762.00" y1="412.00" x2="1118.00" y2="412.00" stroke="#ffffff" stroke-width="2" />
<path d="M1117 408.3 L1124.5 412 L1117 415.7 Z" fill="#ffffff" stroke="none" stroke-width="1" />
<line x1="762.00" y1="404.00" x2="762.00" y2="760.00" stroke="#ffffff" stroke-width="2" />
<path d="M758.3 759 L762 766.5 L765.7 759 Z" fill="#ffffff" stroke="none" stroke-width="1" />
<line x1="912.60" y1="406.50" x2="912.60" y2="412.00" stroke="#ffffff" stroke-width="1.5" />
<line x1="1063.80" y1="406.50" x2="1063.80" y2="412.00" stroke="#ffffff" stroke-width="1.5" />
<line x1="762.00" y1="555.20" x2="767.50" y2="555.20" stroke="#ffffff" stroke-width="1.5" />
<line x1="762.00" y1="698.70" x2="767.50" y2="698.70" stroke="#ffffff" stroke-width="1.5" />
<line x1="656.80" y1="734.90" x2="1120.20" y2="292.70" stroke="#ffffff" stroke-width="1.7" />
<path d="M1124.2 288.9 L1114.7 292.4 L1120.7 298.4 Z" fill="#000" stroke="#ffffff" stroke-width="1.4" />
<line x1="656.80" y1="734.90" x2="652.50" y2="730.60" stroke="#ffffff" stroke-width="1.5" />
<line x1="669.00" y1="723.26" x2="670.52" y2="724.85" stroke="#ffffff" stroke-width="1.6" />
<line x1="686.73" y1="706.34" x2="688.24" y2="707.94" stroke="#ffffff" stroke-width="1.6" />
<line x1="704.45" y1="689.43" x2="705.97" y2="691.02" stroke="#ffffff" stroke-width="1.6" />
<line x1="722.18" y1="672.52" x2="723.69" y2="674.11" stroke="#ffffff" stroke-width="1.6" />
<line x1="739.90" y1="655.60" x2="741.42" y2="657.20" stroke="#ffffff" stroke-width="1.6" />
<line x1="757.63" y1="638.69" x2="759.14" y2="640.28" stroke="#ffffff" stroke-width="1.6" />
<line x1="775.35" y1="621.78" x2="776.87" y2="623.37" stroke="#ffffff" stroke-width="1.6" />
<line x1="793.08" y1="604.86" x2="794.59" y2="606.46" stroke="#ffffff" stroke-width="1.6" />
<line x1="810.80" y1="587.95" x2="812.32" y2="589.54" stroke="#ffffff" stroke-width="1.6" />
<line x1="828.53" y1="571.04" x2="830.05" y2="572.63" stroke="#ffffff" stroke-width="1.6" />
<line x1="846.25" y1="554.12" x2="847.77" y2="555.71" stroke="#ffffff" stroke-width="1.6" />
<line x1="863.98" y1="537.21" x2="865.50" y2="538.80" stroke="#ffffff" stroke-width="1.6" />
<line x1="881.70" y1="520.30" x2="883.22" y2="521.89" stroke="#ffffff" stroke-width="1.6" />
<line x1="899.43" y1="503.38" x2="900.95" y2="504.97" stroke="#ffffff" stroke-width="1.6" />
<line x1="917.15" y1="486.47" x2="918.67" y2="488.06" stroke="#ffffff" stroke-width="1.6" />
<line x1="934.88" y1="469.55" x2="936.40" y2="471.15" stroke="#ffffff" stroke-width="1.6" />
<line x1="952.60" y1="452.64" x2="954.12" y2="454.23" stroke="#ffffff" stroke-width="1.6" />
<line x1="970.33" y1="435.73" x2="971.85" y2="437.32" stroke="#ffffff" stroke-width="1.6" />
<line x1="988.05" y1="418.81" x2="989.57" y2="420.41" stroke="#ffffff" stroke-width="1.6" />
<line x1="1005.78" y1="401.90" x2="1007.30" y2="403.49" stroke="#ffffff" stroke-width="1.6" />
<line x1="1023.50" y1="384.99" x2="1025.02" y2="386.58" stroke="#ffffff" stroke-width="1.6" />
<line x1="1041.23" y1="368.07" x2="1042.75" y2="369.66" stroke="#ffffff" stroke-width="1.6" />
<line x1="1058.95" y1="351.16" x2="1060.47" y2="352.75" stroke="#ffffff" stroke-width="1.6" />
<line x1="1076.68" y1="334.25" x2="1078.20" y2="335.84" stroke="#ffffff" stroke-width="1.6" />
<line x1="1094.40" y1="317.33" x2="1095.92" y2="318.92" stroke="#ffffff" stroke-width="1.6" />
<line x1="1112.13" y1="300.42" x2="1113.65" y2="302.01" stroke="#ffffff" stroke-width="1.6" />
<line x1="762.50" y1="634.04" x2="759.05" y2="630.42" stroke="#ffffff" stroke-width="1.3" />
<line x1="868.30" y1="533.08" x2="864.85" y2="529.47" stroke="#ffffff" stroke-width="1.3" />
<line x1="974.80" y1="431.46" x2="971.35" y2="427.84" stroke="#ffffff" stroke-width="1.3" />
<line x1="1080.50" y1="330.60" x2="1077.05" y2="326.98" stroke="#ffffff" stroke-width="1.3" />
<text x="1132.00" y="286.80" font-size="10" fill="#eeeeee" font-weight="normal" text-anchor="start" textLength="137" lengthAdjust="spacing" >0.8768( 0.6200 , 0.6200 )</text>
<text x="1132.00" y="433.70" font-size="10" fill="#eeeeee" font-weight="normal" text-anchor="start" textLength="37" lengthAdjust="spacing" >0.4800</text>
<text x="770.50" y="789.50" font-size="10" fill="#eeeeee" font-weight="normal" text-anchor="start" textLength="37" lengthAdjust="spacing" >0.4950</text>
</g>
</svg>
</body></html>
